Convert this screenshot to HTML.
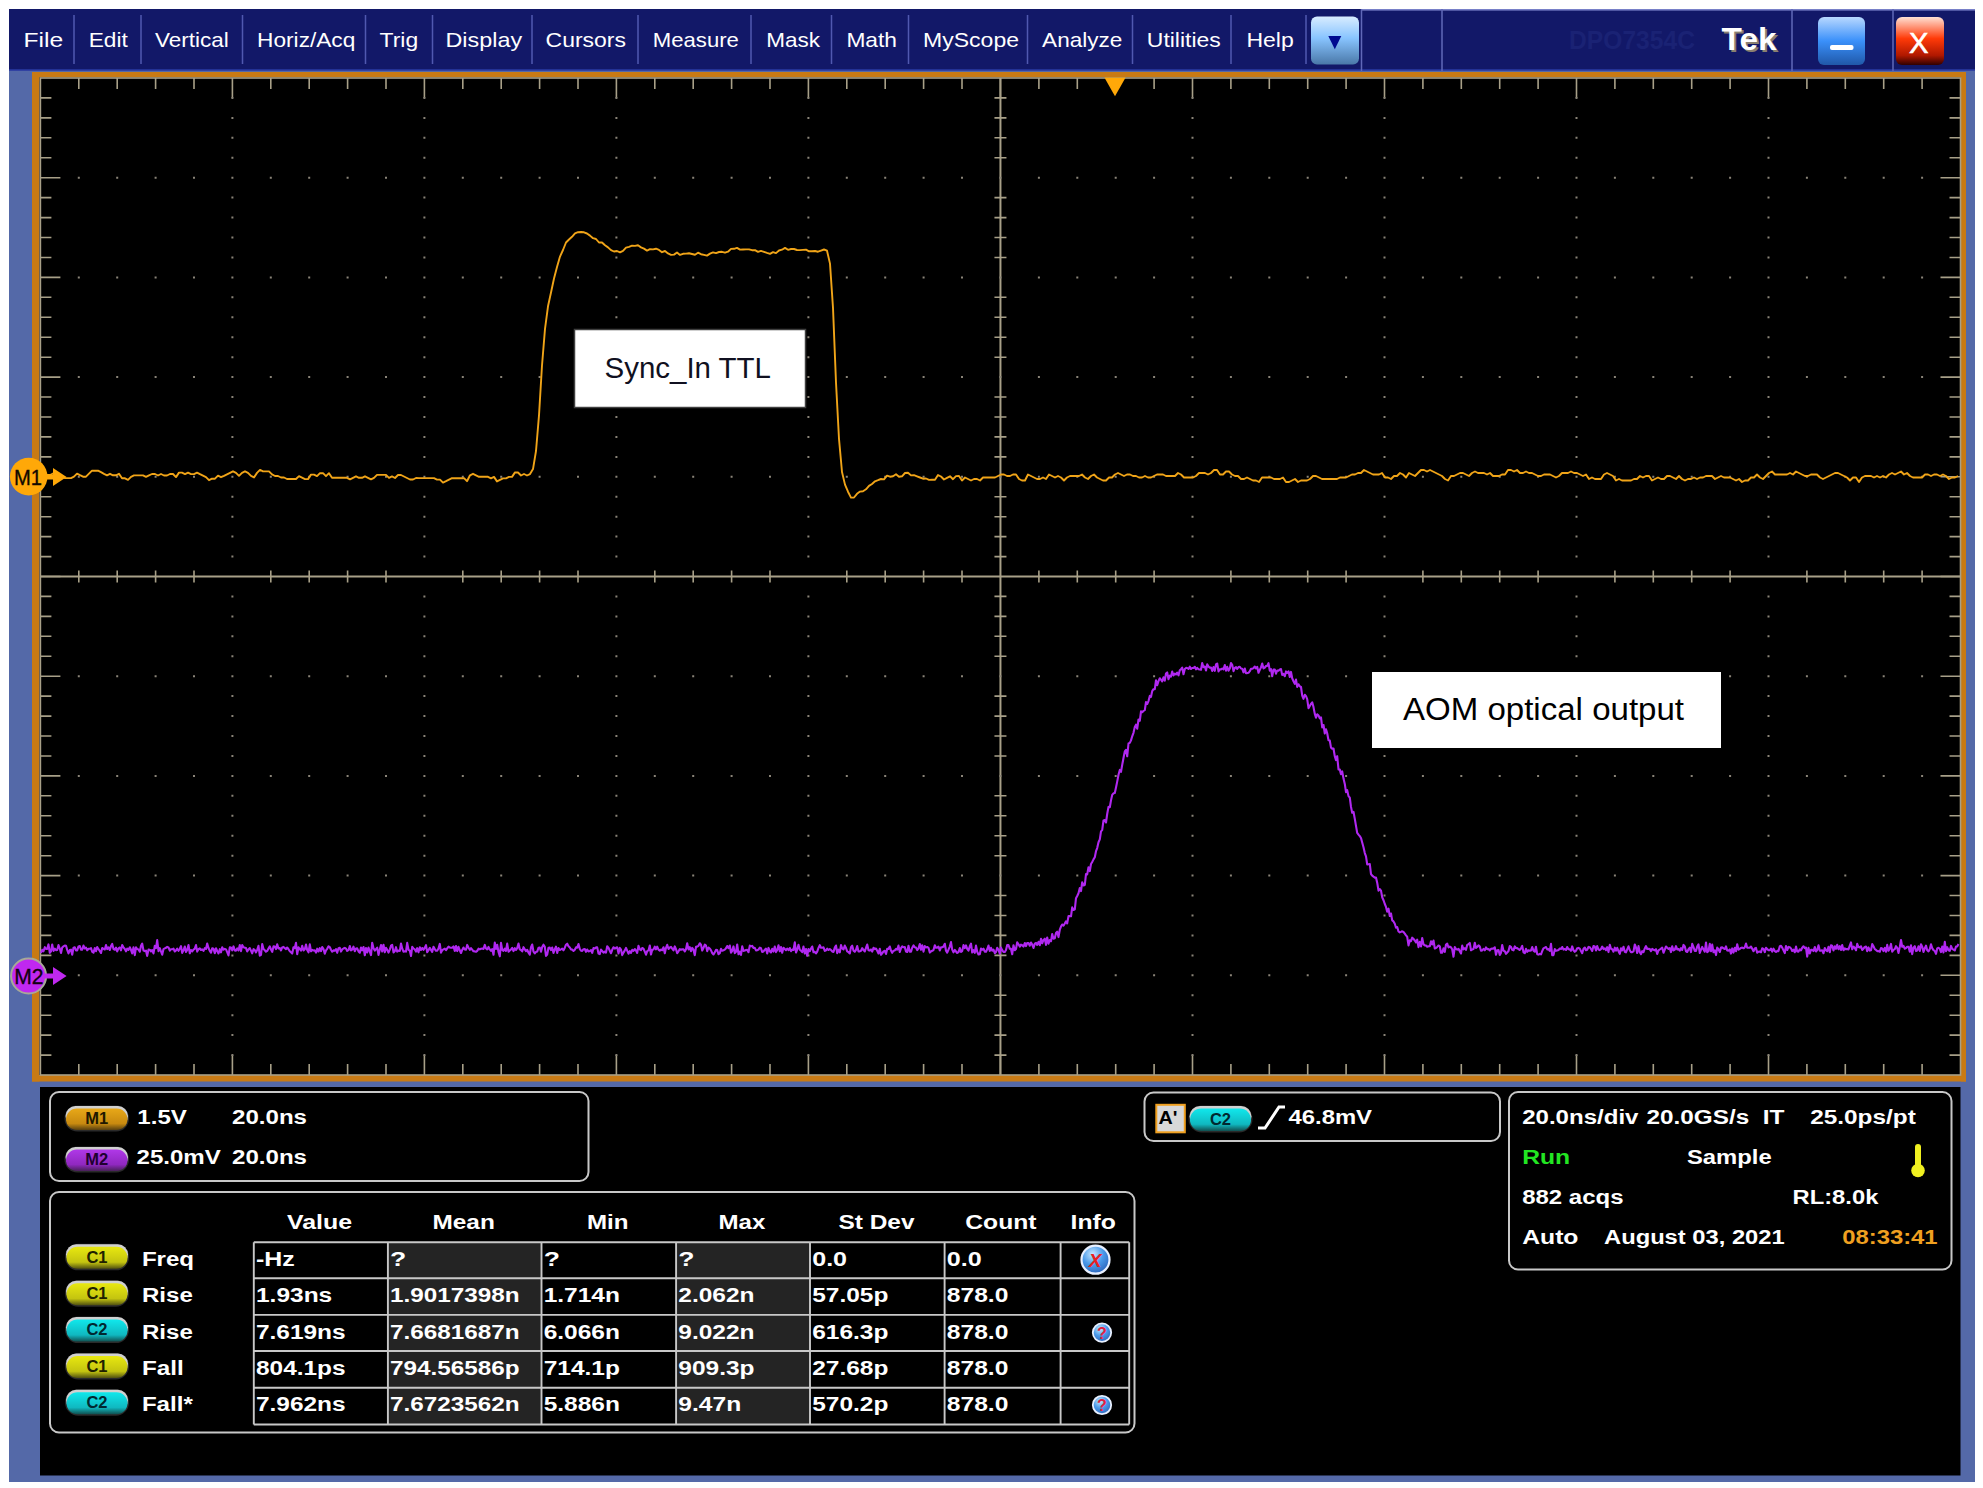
<!DOCTYPE html><html><head><meta charset="utf-8"><style>html,body{margin:0;padding:0;background:#fff;width:1983px;height:1488px;overflow:hidden}svg{display:block}text{font-family:"Liberation Sans",sans-serif}</style></head><body>
<svg width="1983" height="1488" viewBox="0 0 1983 1488">
<defs>
<linearGradient id="gBtn" x1="0" y1="0" x2="0" y2="1"><stop offset="0" stop-color="#d8ecff"/><stop offset="0.45" stop-color="#88c4ff"/><stop offset="1" stop-color="#4a78a8"/></linearGradient>
<linearGradient id="gMin" x1="0" y1="0" x2="0" y2="1"><stop offset="0" stop-color="#b8d8ff"/><stop offset="0.5" stop-color="#3a90fa"/><stop offset="1" stop-color="#2058a8"/></linearGradient>
<linearGradient id="gCls" x1="0" y1="0" x2="0" y2="1"><stop offset="0" stop-color="#ffe0d4"/><stop offset="0.45" stop-color="#ff3a08"/><stop offset="0.8" stop-color="#b01800"/><stop offset="1" stop-color="#300000"/></linearGradient>
<linearGradient id="gM1" x1="0" y1="0" x2="0" y2="1"><stop offset="0" stop-color="#e8a818"/><stop offset="0.7" stop-color="#c88a10"/><stop offset="1" stop-color="#584010"/></linearGradient>
<linearGradient id="gM2" x1="0" y1="0" x2="0" y2="1"><stop offset="0" stop-color="#b038e8"/><stop offset="0.7" stop-color="#9028c0"/><stop offset="1" stop-color="#482058"/></linearGradient>
<linearGradient id="gC1" x1="0" y1="0" x2="0" y2="1"><stop offset="0" stop-color="#e8e810"/><stop offset="0.7" stop-color="#c4c410"/><stop offset="1" stop-color="#505010"/></linearGradient>
<linearGradient id="gC2" x1="0" y1="0" x2="0" y2="1"><stop offset="0" stop-color="#10e8ec"/><stop offset="0.7" stop-color="#10b8c0"/><stop offset="1" stop-color="#105050"/></linearGradient>
<radialGradient id="gBall" cx="0.4" cy="0.3" r="0.75"><stop offset="0" stop-color="#c8e8ff"/><stop offset="0.5" stop-color="#4a9aea"/><stop offset="1" stop-color="#2a60b8"/></radialGradient>
</defs>
<rect x="9" y="9" width="1966" height="1473" fill="#5469a8"/>
<rect x="9" y="9" width="1966" height="61" fill="#121868"/>
<rect x="9" y="69" width="1966" height="2" fill="#2838a0" opacity="0.8"/>
<rect x="1362" y="9" width="613" height="1.6" fill="#7880c8"/>
<rect x="73.25" y="15" width="1.5" height="49" fill="#5058b0"/>
<rect x="140.25" y="15" width="1.5" height="49" fill="#5058b0"/>
<rect x="241.75" y="15" width="1.5" height="49" fill="#5058b0"/>
<rect x="364.75" y="15" width="1.5" height="49" fill="#5058b0"/>
<rect x="431.75" y="15" width="1.5" height="49" fill="#5058b0"/>
<rect x="531.25" y="15" width="1.5" height="49" fill="#5058b0"/>
<rect x="637.25" y="15" width="1.5" height="49" fill="#5058b0"/>
<rect x="750.25" y="15" width="1.5" height="49" fill="#5058b0"/>
<rect x="830.75" y="15" width="1.5" height="49" fill="#5058b0"/>
<rect x="907.75" y="15" width="1.5" height="49" fill="#5058b0"/>
<rect x="1026.75" y="15" width="1.5" height="49" fill="#5058b0"/>
<rect x="1131.75" y="15" width="1.5" height="49" fill="#5058b0"/>
<rect x="1230.25" y="15" width="1.5" height="49" fill="#5058b0"/>
<rect x="1305.25" y="15" width="1.5" height="49" fill="#5058b0"/>
<rect x="1360.75" y="9" width="1.5" height="62" fill="#6068b8"/>
<rect x="1441.25" y="9" width="1.5" height="62" fill="#6068b8"/>
<rect x="1791.25" y="9" width="1.5" height="62" fill="#6068b8"/>
<rect x="1892.25" y="9" width="1.5" height="62" fill="#6068b8"/>
<text x="23.4" y="47" font-size="21" fill="#ffffff" textLength="39.7" lengthAdjust="spacingAndGlyphs">File</text>
<text x="88.7" y="47" font-size="21" fill="#ffffff" textLength="39.1" lengthAdjust="spacingAndGlyphs">Edit</text>
<text x="155.0" y="47" font-size="21" fill="#ffffff" textLength="73.7" lengthAdjust="spacingAndGlyphs">Vertical</text>
<text x="257.09999999999997" y="47" font-size="21" fill="#ffffff" textLength="98.2" lengthAdjust="spacingAndGlyphs">Horiz/Acq</text>
<text x="379.59999999999997" y="47" font-size="21" fill="#ffffff" textLength="38.6" lengthAdjust="spacingAndGlyphs">Trig</text>
<text x="445.5" y="47" font-size="21" fill="#ffffff" textLength="76.6" lengthAdjust="spacingAndGlyphs">Display</text>
<text x="545.6" y="47" font-size="21" fill="#ffffff" textLength="80.4" lengthAdjust="spacingAndGlyphs">Cursors</text>
<text x="652.8" y="47" font-size="21" fill="#ffffff" textLength="86.1" lengthAdjust="spacingAndGlyphs">Measure</text>
<text x="766.3" y="47" font-size="21" fill="#ffffff" textLength="53.8" lengthAdjust="spacingAndGlyphs">Mask</text>
<text x="846.4" y="47" font-size="21" fill="#ffffff" textLength="50.6" lengthAdjust="spacingAndGlyphs">Math</text>
<text x="923.1" y="47" font-size="21" fill="#ffffff" textLength="95.9" lengthAdjust="spacingAndGlyphs">MyScope</text>
<text x="1042.1000000000001" y="47" font-size="21" fill="#ffffff" textLength="80.3" lengthAdjust="spacingAndGlyphs">Analyze</text>
<text x="1146.8000000000002" y="47" font-size="21" fill="#ffffff" textLength="74.0" lengthAdjust="spacingAndGlyphs">Utilities</text>
<text x="1246.4" y="47" font-size="21" fill="#ffffff" textLength="47.4" lengthAdjust="spacingAndGlyphs">Help</text>
<rect x="1311" y="16.5" width="48" height="48" rx="6" fill="url(#gBtn)"/>
<path d="M1328.3 36 L1341.3 36 L1334.8 49.3 Z" fill="#000a90"/>
<text x="1569" y="48.8" font-size="26" font-weight="bold" fill="#1a2274" textLength="126" lengthAdjust="spacingAndGlyphs">DPO7354C</text>
<text x="1723.5" y="51.5" font-size="32" font-weight="bold" fill="#8a8070" textLength="55" lengthAdjust="spacingAndGlyphs">Tek</text>
<text x="1721.5" y="49.5" font-size="32" font-weight="bold" fill="#ffffff" textLength="55" lengthAdjust="spacingAndGlyphs">Tek</text>
<rect x="1818" y="17" width="47" height="48" rx="6" fill="url(#gMin)"/>
<rect x="1830" y="45" width="23.5" height="5" rx="2" fill="#ffffff"/>
<rect x="1896" y="17" width="48" height="48" rx="6" fill="url(#gCls)"/>
<text x="1909" y="53.2" font-size="30" fill="#ffffff" stroke="#ffffff" stroke-width="0.6" textLength="19.5" lengthAdjust="spacingAndGlyphs">X</text>
<rect x="32" y="72" width="1934" height="9.5" fill="#c87a14"/>
<rect x="32" y="72" width="7.5" height="1009.5" fill="#c87a14"/>
<rect x="1960.8" y="72" width="5.2" height="1009.5" fill="#c87a14"/>
<rect x="32" y="1075" width="1934" height="6.5" fill="#c87a14"/>
<rect x="39.5" y="77.3" width="1921.3" height="997.7" fill="#000"/>
<rect x="40.4" y="78" width="1920.1" height="997" fill="none" stroke="#a8a088" stroke-width="1.6"/><line x1="1000.4499999999999" y1="78" x2="1000.4499999999999" y2="1075" stroke="#a8a088" stroke-width="2"/><line x1="40.4" y1="576.5" x2="1960.5" y2="576.5" stroke="#a8a088" stroke-width="2"/><path d="M78.8 78v11M78.8 1075v-11M78.8 570.5v12M117.2 78v11M117.2 1075v-11M117.2 570.5v12M155.6 78v11M155.6 1075v-11M155.6 570.5v12M194.0 78v11M194.0 1075v-11M194.0 570.5v12M232.4 78v20M232.4 1075v-20M270.8 78v11M270.8 1075v-11M270.8 570.5v12M309.2 78v11M309.2 1075v-11M309.2 570.5v12M347.6 78v11M347.6 1075v-11M347.6 570.5v12M386.0 78v11M386.0 1075v-11M386.0 570.5v12M424.4 78v20M424.4 1075v-20M462.8 78v11M462.8 1075v-11M462.8 570.5v12M501.2 78v11M501.2 1075v-11M501.2 570.5v12M539.6 78v11M539.6 1075v-11M539.6 570.5v12M578.0 78v11M578.0 1075v-11M578.0 570.5v12M616.4 78v20M616.4 1075v-20M654.8 78v11M654.8 1075v-11M654.8 570.5v12M693.2 78v11M693.2 1075v-11M693.2 570.5v12M731.6 78v11M731.6 1075v-11M731.6 570.5v12M770.0 78v11M770.0 1075v-11M770.0 570.5v12M808.4 78v20M808.4 1075v-20M846.8 78v11M846.8 1075v-11M846.8 570.5v12M885.2 78v11M885.2 1075v-11M885.2 570.5v12M923.6 78v11M923.6 1075v-11M923.6 570.5v12M962.0 78v11M962.0 1075v-11M962.0 570.5v12M1000.4 78v20M1000.4 1075v-20M1038.9 78v11M1038.9 1075v-11M1038.9 570.5v12M1077.3 78v11M1077.3 1075v-11M1077.3 570.5v12M1115.7 78v11M1115.7 1075v-11M1115.7 570.5v12M1154.1 78v11M1154.1 1075v-11M1154.1 570.5v12M1192.5 78v20M1192.5 1075v-20M1230.9 78v11M1230.9 1075v-11M1230.9 570.5v12M1269.3 78v11M1269.3 1075v-11M1269.3 570.5v12M1307.7 78v11M1307.7 1075v-11M1307.7 570.5v12M1346.1 78v11M1346.1 1075v-11M1346.1 570.5v12M1384.5 78v20M1384.5 1075v-20M1422.9 78v11M1422.9 1075v-11M1422.9 570.5v12M1461.3 78v11M1461.3 1075v-11M1461.3 570.5v12M1499.7 78v11M1499.7 1075v-11M1499.7 570.5v12M1538.1 78v11M1538.1 1075v-11M1538.1 570.5v12M1576.5 78v20M1576.5 1075v-20M1614.9 78v11M1614.9 1075v-11M1614.9 570.5v12M1653.3 78v11M1653.3 1075v-11M1653.3 570.5v12M1691.7 78v11M1691.7 1075v-11M1691.7 570.5v12M1730.1 78v11M1730.1 1075v-11M1730.1 570.5v12M1768.5 78v20M1768.5 1075v-20M1806.9 78v11M1806.9 1075v-11M1806.9 570.5v12M1845.3 78v11M1845.3 1075v-11M1845.3 570.5v12M1883.7 78v11M1883.7 1075v-11M1883.7 570.5v12M1922.1 78v11M1922.1 1075v-11M1922.1 570.5v12M40.4 97.9h11M1960.5 97.9h-11M994.4499999999999 97.9h12M40.4 117.9h11M1960.5 117.9h-11M994.4499999999999 117.9h12M40.4 137.8h11M1960.5 137.8h-11M994.4499999999999 137.8h12M40.4 157.8h11M1960.5 157.8h-11M994.4499999999999 157.8h12M40.4 177.7h20M1960.5 177.7h-20M40.4 197.6h11M1960.5 197.6h-11M994.4499999999999 197.6h12M40.4 217.6h11M1960.5 217.6h-11M994.4499999999999 217.6h12M40.4 237.5h11M1960.5 237.5h-11M994.4499999999999 237.5h12M40.4 257.5h11M1960.5 257.5h-11M994.4499999999999 257.5h12M40.4 277.4h20M1960.5 277.4h-20M40.4 297.3h11M1960.5 297.3h-11M994.4499999999999 297.3h12M40.4 317.3h11M1960.5 317.3h-11M994.4499999999999 317.3h12M40.4 337.2h11M1960.5 337.2h-11M994.4499999999999 337.2h12M40.4 357.2h11M1960.5 357.2h-11M994.4499999999999 357.2h12M40.4 377.1h20M1960.5 377.1h-20M40.4 397.0h11M1960.5 397.0h-11M994.4499999999999 397.0h12M40.4 417.0h11M1960.5 417.0h-11M994.4499999999999 417.0h12M40.4 436.9h11M1960.5 436.9h-11M994.4499999999999 436.9h12M40.4 456.9h11M1960.5 456.9h-11M994.4499999999999 456.9h12M40.4 476.8h20M1960.5 476.8h-20M40.4 496.7h11M1960.5 496.7h-11M994.4499999999999 496.7h12M40.4 516.7h11M1960.5 516.7h-11M994.4499999999999 516.7h12M40.4 536.6h11M1960.5 536.6h-11M994.4499999999999 536.6h12M40.4 556.6h11M1960.5 556.6h-11M994.4499999999999 556.6h12M40.4 576.5h20M1960.5 576.5h-20M40.4 596.4h11M1960.5 596.4h-11M994.4499999999999 596.4h12M40.4 616.4h11M1960.5 616.4h-11M994.4499999999999 616.4h12M40.4 636.3h11M1960.5 636.3h-11M994.4499999999999 636.3h12M40.4 656.3h11M1960.5 656.3h-11M994.4499999999999 656.3h12M40.4 676.2h20M1960.5 676.2h-20M40.4 696.1h11M1960.5 696.1h-11M994.4499999999999 696.1h12M40.4 716.1h11M1960.5 716.1h-11M994.4499999999999 716.1h12M40.4 736.0h11M1960.5 736.0h-11M994.4499999999999 736.0h12M40.4 756.0h11M1960.5 756.0h-11M994.4499999999999 756.0h12M40.4 775.9h20M1960.5 775.9h-20M40.4 795.8h11M1960.5 795.8h-11M994.4499999999999 795.8h12M40.4 815.8h11M1960.5 815.8h-11M994.4499999999999 815.8h12M40.4 835.7h11M1960.5 835.7h-11M994.4499999999999 835.7h12M40.4 855.7h11M1960.5 855.7h-11M994.4499999999999 855.7h12M40.4 875.6h20M1960.5 875.6h-20M40.4 895.5h11M1960.5 895.5h-11M994.4499999999999 895.5h12M40.4 915.5h11M1960.5 915.5h-11M994.4499999999999 915.5h12M40.4 935.4h11M1960.5 935.4h-11M994.4499999999999 935.4h12M40.4 955.4h11M1960.5 955.4h-11M994.4499999999999 955.4h12M40.4 975.3h20M1960.5 975.3h-20M40.4 995.2h11M1960.5 995.2h-11M994.4499999999999 995.2h12M40.4 1015.2h11M1960.5 1015.2h-11M994.4499999999999 1015.2h12M40.4 1035.1h11M1960.5 1035.1h-11M994.4499999999999 1035.1h12M40.4 1055.1h11M1960.5 1055.1h-11M994.4499999999999 1055.1h12" stroke="#a8a088" stroke-width="1.6" fill="none"/><path d="M231.4 96.9h2v2h-2zM231.4 116.9h2v2h-2zM231.4 136.8h2v2h-2zM231.4 156.8h2v2h-2zM231.4 196.6h2v2h-2zM231.4 216.6h2v2h-2zM231.4 236.5h2v2h-2zM231.4 256.5h2v2h-2zM231.4 296.3h2v2h-2zM231.4 316.3h2v2h-2zM231.4 336.2h2v2h-2zM231.4 356.2h2v2h-2zM231.4 396.0h2v2h-2zM231.4 416.0h2v2h-2zM231.4 435.9h2v2h-2zM231.4 455.9h2v2h-2zM231.4 495.7h2v2h-2zM231.4 515.7h2v2h-2zM231.4 535.6h2v2h-2zM231.4 555.6h2v2h-2zM231.4 595.4h2v2h-2zM231.4 615.4h2v2h-2zM231.4 635.3h2v2h-2zM231.4 655.3h2v2h-2zM231.4 695.1h2v2h-2zM231.4 715.1h2v2h-2zM231.4 735.0h2v2h-2zM231.4 755.0h2v2h-2zM231.4 794.8h2v2h-2zM231.4 814.8h2v2h-2zM231.4 834.7h2v2h-2zM231.4 854.7h2v2h-2zM231.4 894.5h2v2h-2zM231.4 914.5h2v2h-2zM231.4 934.4h2v2h-2zM231.4 954.4h2v2h-2zM231.4 994.2h2v2h-2zM231.4 1014.2h2v2h-2zM231.4 1034.1h2v2h-2zM231.4 1054.1h2v2h-2zM77.8 176.7h2v2h-2zM116.2 176.7h2v2h-2zM154.6 176.7h2v2h-2zM193.0 176.7h2v2h-2zM231.4 176.7h2v2h-2zM269.8 176.7h2v2h-2zM308.2 176.7h2v2h-2zM346.6 176.7h2v2h-2zM385.0 176.7h2v2h-2zM423.4 176.7h2v2h-2zM461.8 176.7h2v2h-2zM500.2 176.7h2v2h-2zM538.6 176.7h2v2h-2zM577.0 176.7h2v2h-2zM615.4 176.7h2v2h-2zM653.8 176.7h2v2h-2zM692.2 176.7h2v2h-2zM730.6 176.7h2v2h-2zM769.0 176.7h2v2h-2zM807.4 176.7h2v2h-2zM845.8 176.7h2v2h-2zM884.2 176.7h2v2h-2zM922.6 176.7h2v2h-2zM961.0 176.7h2v2h-2zM999.4 176.7h2v2h-2zM1037.9 176.7h2v2h-2zM1076.3 176.7h2v2h-2zM1114.7 176.7h2v2h-2zM1153.1 176.7h2v2h-2zM1191.5 176.7h2v2h-2zM1229.9 176.7h2v2h-2zM1268.3 176.7h2v2h-2zM1306.7 176.7h2v2h-2zM1345.1 176.7h2v2h-2zM1383.5 176.7h2v2h-2zM1421.9 176.7h2v2h-2zM1460.3 176.7h2v2h-2zM1498.7 176.7h2v2h-2zM1537.1 176.7h2v2h-2zM1575.5 176.7h2v2h-2zM1613.9 176.7h2v2h-2zM1652.3 176.7h2v2h-2zM1690.7 176.7h2v2h-2zM1729.1 176.7h2v2h-2zM1767.5 176.7h2v2h-2zM1805.9 176.7h2v2h-2zM1844.3 176.7h2v2h-2zM1882.7 176.7h2v2h-2zM1921.1 176.7h2v2h-2zM423.4 96.9h2v2h-2zM423.4 116.9h2v2h-2zM423.4 136.8h2v2h-2zM423.4 156.8h2v2h-2zM423.4 196.6h2v2h-2zM423.4 216.6h2v2h-2zM423.4 236.5h2v2h-2zM423.4 256.5h2v2h-2zM423.4 296.3h2v2h-2zM423.4 316.3h2v2h-2zM423.4 336.2h2v2h-2zM423.4 356.2h2v2h-2zM423.4 396.0h2v2h-2zM423.4 416.0h2v2h-2zM423.4 435.9h2v2h-2zM423.4 455.9h2v2h-2zM423.4 495.7h2v2h-2zM423.4 515.7h2v2h-2zM423.4 535.6h2v2h-2zM423.4 555.6h2v2h-2zM423.4 595.4h2v2h-2zM423.4 615.4h2v2h-2zM423.4 635.3h2v2h-2zM423.4 655.3h2v2h-2zM423.4 695.1h2v2h-2zM423.4 715.1h2v2h-2zM423.4 735.0h2v2h-2zM423.4 755.0h2v2h-2zM423.4 794.8h2v2h-2zM423.4 814.8h2v2h-2zM423.4 834.7h2v2h-2zM423.4 854.7h2v2h-2zM423.4 894.5h2v2h-2zM423.4 914.5h2v2h-2zM423.4 934.4h2v2h-2zM423.4 954.4h2v2h-2zM423.4 994.2h2v2h-2zM423.4 1014.2h2v2h-2zM423.4 1034.1h2v2h-2zM423.4 1054.1h2v2h-2zM77.8 276.4h2v2h-2zM116.2 276.4h2v2h-2zM154.6 276.4h2v2h-2zM193.0 276.4h2v2h-2zM231.4 276.4h2v2h-2zM269.8 276.4h2v2h-2zM308.2 276.4h2v2h-2zM346.6 276.4h2v2h-2zM385.0 276.4h2v2h-2zM423.4 276.4h2v2h-2zM461.8 276.4h2v2h-2zM500.2 276.4h2v2h-2zM538.6 276.4h2v2h-2zM577.0 276.4h2v2h-2zM615.4 276.4h2v2h-2zM653.8 276.4h2v2h-2zM692.2 276.4h2v2h-2zM730.6 276.4h2v2h-2zM769.0 276.4h2v2h-2zM807.4 276.4h2v2h-2zM845.8 276.4h2v2h-2zM884.2 276.4h2v2h-2zM922.6 276.4h2v2h-2zM961.0 276.4h2v2h-2zM999.4 276.4h2v2h-2zM1037.9 276.4h2v2h-2zM1076.3 276.4h2v2h-2zM1114.7 276.4h2v2h-2zM1153.1 276.4h2v2h-2zM1191.5 276.4h2v2h-2zM1229.9 276.4h2v2h-2zM1268.3 276.4h2v2h-2zM1306.7 276.4h2v2h-2zM1345.1 276.4h2v2h-2zM1383.5 276.4h2v2h-2zM1421.9 276.4h2v2h-2zM1460.3 276.4h2v2h-2zM1498.7 276.4h2v2h-2zM1537.1 276.4h2v2h-2zM1575.5 276.4h2v2h-2zM1613.9 276.4h2v2h-2zM1652.3 276.4h2v2h-2zM1690.7 276.4h2v2h-2zM1729.1 276.4h2v2h-2zM1767.5 276.4h2v2h-2zM1805.9 276.4h2v2h-2zM1844.3 276.4h2v2h-2zM1882.7 276.4h2v2h-2zM1921.1 276.4h2v2h-2zM615.4 96.9h2v2h-2zM615.4 116.9h2v2h-2zM615.4 136.8h2v2h-2zM615.4 156.8h2v2h-2zM615.4 196.6h2v2h-2zM615.4 216.6h2v2h-2zM615.4 236.5h2v2h-2zM615.4 256.5h2v2h-2zM615.4 296.3h2v2h-2zM615.4 316.3h2v2h-2zM615.4 336.2h2v2h-2zM615.4 356.2h2v2h-2zM615.4 396.0h2v2h-2zM615.4 416.0h2v2h-2zM615.4 435.9h2v2h-2zM615.4 455.9h2v2h-2zM615.4 495.7h2v2h-2zM615.4 515.7h2v2h-2zM615.4 535.6h2v2h-2zM615.4 555.6h2v2h-2zM615.4 595.4h2v2h-2zM615.4 615.4h2v2h-2zM615.4 635.3h2v2h-2zM615.4 655.3h2v2h-2zM615.4 695.1h2v2h-2zM615.4 715.1h2v2h-2zM615.4 735.0h2v2h-2zM615.4 755.0h2v2h-2zM615.4 794.8h2v2h-2zM615.4 814.8h2v2h-2zM615.4 834.7h2v2h-2zM615.4 854.7h2v2h-2zM615.4 894.5h2v2h-2zM615.4 914.5h2v2h-2zM615.4 934.4h2v2h-2zM615.4 954.4h2v2h-2zM615.4 994.2h2v2h-2zM615.4 1014.2h2v2h-2zM615.4 1034.1h2v2h-2zM615.4 1054.1h2v2h-2zM77.8 376.1h2v2h-2zM116.2 376.1h2v2h-2zM154.6 376.1h2v2h-2zM193.0 376.1h2v2h-2zM231.4 376.1h2v2h-2zM269.8 376.1h2v2h-2zM308.2 376.1h2v2h-2zM346.6 376.1h2v2h-2zM385.0 376.1h2v2h-2zM423.4 376.1h2v2h-2zM461.8 376.1h2v2h-2zM500.2 376.1h2v2h-2zM538.6 376.1h2v2h-2zM577.0 376.1h2v2h-2zM615.4 376.1h2v2h-2zM653.8 376.1h2v2h-2zM692.2 376.1h2v2h-2zM730.6 376.1h2v2h-2zM769.0 376.1h2v2h-2zM807.4 376.1h2v2h-2zM845.8 376.1h2v2h-2zM884.2 376.1h2v2h-2zM922.6 376.1h2v2h-2zM961.0 376.1h2v2h-2zM999.4 376.1h2v2h-2zM1037.9 376.1h2v2h-2zM1076.3 376.1h2v2h-2zM1114.7 376.1h2v2h-2zM1153.1 376.1h2v2h-2zM1191.5 376.1h2v2h-2zM1229.9 376.1h2v2h-2zM1268.3 376.1h2v2h-2zM1306.7 376.1h2v2h-2zM1345.1 376.1h2v2h-2zM1383.5 376.1h2v2h-2zM1421.9 376.1h2v2h-2zM1460.3 376.1h2v2h-2zM1498.7 376.1h2v2h-2zM1537.1 376.1h2v2h-2zM1575.5 376.1h2v2h-2zM1613.9 376.1h2v2h-2zM1652.3 376.1h2v2h-2zM1690.7 376.1h2v2h-2zM1729.1 376.1h2v2h-2zM1767.5 376.1h2v2h-2zM1805.9 376.1h2v2h-2zM1844.3 376.1h2v2h-2zM1882.7 376.1h2v2h-2zM1921.1 376.1h2v2h-2zM807.4 96.9h2v2h-2zM807.4 116.9h2v2h-2zM807.4 136.8h2v2h-2zM807.4 156.8h2v2h-2zM807.4 196.6h2v2h-2zM807.4 216.6h2v2h-2zM807.4 236.5h2v2h-2zM807.4 256.5h2v2h-2zM807.4 296.3h2v2h-2zM807.4 316.3h2v2h-2zM807.4 336.2h2v2h-2zM807.4 356.2h2v2h-2zM807.4 396.0h2v2h-2zM807.4 416.0h2v2h-2zM807.4 435.9h2v2h-2zM807.4 455.9h2v2h-2zM807.4 495.7h2v2h-2zM807.4 515.7h2v2h-2zM807.4 535.6h2v2h-2zM807.4 555.6h2v2h-2zM807.4 595.4h2v2h-2zM807.4 615.4h2v2h-2zM807.4 635.3h2v2h-2zM807.4 655.3h2v2h-2zM807.4 695.1h2v2h-2zM807.4 715.1h2v2h-2zM807.4 735.0h2v2h-2zM807.4 755.0h2v2h-2zM807.4 794.8h2v2h-2zM807.4 814.8h2v2h-2zM807.4 834.7h2v2h-2zM807.4 854.7h2v2h-2zM807.4 894.5h2v2h-2zM807.4 914.5h2v2h-2zM807.4 934.4h2v2h-2zM807.4 954.4h2v2h-2zM807.4 994.2h2v2h-2zM807.4 1014.2h2v2h-2zM807.4 1034.1h2v2h-2zM807.4 1054.1h2v2h-2zM77.8 475.8h2v2h-2zM116.2 475.8h2v2h-2zM154.6 475.8h2v2h-2zM193.0 475.8h2v2h-2zM231.4 475.8h2v2h-2zM269.8 475.8h2v2h-2zM308.2 475.8h2v2h-2zM346.6 475.8h2v2h-2zM385.0 475.8h2v2h-2zM423.4 475.8h2v2h-2zM461.8 475.8h2v2h-2zM500.2 475.8h2v2h-2zM538.6 475.8h2v2h-2zM577.0 475.8h2v2h-2zM615.4 475.8h2v2h-2zM653.8 475.8h2v2h-2zM692.2 475.8h2v2h-2zM730.6 475.8h2v2h-2zM769.0 475.8h2v2h-2zM807.4 475.8h2v2h-2zM845.8 475.8h2v2h-2zM884.2 475.8h2v2h-2zM922.6 475.8h2v2h-2zM961.0 475.8h2v2h-2zM999.4 475.8h2v2h-2zM1037.9 475.8h2v2h-2zM1076.3 475.8h2v2h-2zM1114.7 475.8h2v2h-2zM1153.1 475.8h2v2h-2zM1191.5 475.8h2v2h-2zM1229.9 475.8h2v2h-2zM1268.3 475.8h2v2h-2zM1306.7 475.8h2v2h-2zM1345.1 475.8h2v2h-2zM1383.5 475.8h2v2h-2zM1421.9 475.8h2v2h-2zM1460.3 475.8h2v2h-2zM1498.7 475.8h2v2h-2zM1537.1 475.8h2v2h-2zM1575.5 475.8h2v2h-2zM1613.9 475.8h2v2h-2zM1652.3 475.8h2v2h-2zM1690.7 475.8h2v2h-2zM1729.1 475.8h2v2h-2zM1767.5 475.8h2v2h-2zM1805.9 475.8h2v2h-2zM1844.3 475.8h2v2h-2zM1882.7 475.8h2v2h-2zM1921.1 475.8h2v2h-2zM1191.5 96.9h2v2h-2zM1191.5 116.9h2v2h-2zM1191.5 136.8h2v2h-2zM1191.5 156.8h2v2h-2zM1191.5 196.6h2v2h-2zM1191.5 216.6h2v2h-2zM1191.5 236.5h2v2h-2zM1191.5 256.5h2v2h-2zM1191.5 296.3h2v2h-2zM1191.5 316.3h2v2h-2zM1191.5 336.2h2v2h-2zM1191.5 356.2h2v2h-2zM1191.5 396.0h2v2h-2zM1191.5 416.0h2v2h-2zM1191.5 435.9h2v2h-2zM1191.5 455.9h2v2h-2zM1191.5 495.7h2v2h-2zM1191.5 515.7h2v2h-2zM1191.5 535.6h2v2h-2zM1191.5 555.6h2v2h-2zM1191.5 595.4h2v2h-2zM1191.5 615.4h2v2h-2zM1191.5 635.3h2v2h-2zM1191.5 655.3h2v2h-2zM1191.5 695.1h2v2h-2zM1191.5 715.1h2v2h-2zM1191.5 735.0h2v2h-2zM1191.5 755.0h2v2h-2zM1191.5 794.8h2v2h-2zM1191.5 814.8h2v2h-2zM1191.5 834.7h2v2h-2zM1191.5 854.7h2v2h-2zM1191.5 894.5h2v2h-2zM1191.5 914.5h2v2h-2zM1191.5 934.4h2v2h-2zM1191.5 954.4h2v2h-2zM1191.5 994.2h2v2h-2zM1191.5 1014.2h2v2h-2zM1191.5 1034.1h2v2h-2zM1191.5 1054.1h2v2h-2zM77.8 675.2h2v2h-2zM116.2 675.2h2v2h-2zM154.6 675.2h2v2h-2zM193.0 675.2h2v2h-2zM231.4 675.2h2v2h-2zM269.8 675.2h2v2h-2zM308.2 675.2h2v2h-2zM346.6 675.2h2v2h-2zM385.0 675.2h2v2h-2zM423.4 675.2h2v2h-2zM461.8 675.2h2v2h-2zM500.2 675.2h2v2h-2zM538.6 675.2h2v2h-2zM577.0 675.2h2v2h-2zM615.4 675.2h2v2h-2zM653.8 675.2h2v2h-2zM692.2 675.2h2v2h-2zM730.6 675.2h2v2h-2zM769.0 675.2h2v2h-2zM807.4 675.2h2v2h-2zM845.8 675.2h2v2h-2zM884.2 675.2h2v2h-2zM922.6 675.2h2v2h-2zM961.0 675.2h2v2h-2zM999.4 675.2h2v2h-2zM1037.9 675.2h2v2h-2zM1076.3 675.2h2v2h-2zM1114.7 675.2h2v2h-2zM1153.1 675.2h2v2h-2zM1191.5 675.2h2v2h-2zM1229.9 675.2h2v2h-2zM1268.3 675.2h2v2h-2zM1306.7 675.2h2v2h-2zM1345.1 675.2h2v2h-2zM1383.5 675.2h2v2h-2zM1421.9 675.2h2v2h-2zM1460.3 675.2h2v2h-2zM1498.7 675.2h2v2h-2zM1537.1 675.2h2v2h-2zM1575.5 675.2h2v2h-2zM1613.9 675.2h2v2h-2zM1652.3 675.2h2v2h-2zM1690.7 675.2h2v2h-2zM1729.1 675.2h2v2h-2zM1767.5 675.2h2v2h-2zM1805.9 675.2h2v2h-2zM1844.3 675.2h2v2h-2zM1882.7 675.2h2v2h-2zM1921.1 675.2h2v2h-2zM1383.5 96.9h2v2h-2zM1383.5 116.9h2v2h-2zM1383.5 136.8h2v2h-2zM1383.5 156.8h2v2h-2zM1383.5 196.6h2v2h-2zM1383.5 216.6h2v2h-2zM1383.5 236.5h2v2h-2zM1383.5 256.5h2v2h-2zM1383.5 296.3h2v2h-2zM1383.5 316.3h2v2h-2zM1383.5 336.2h2v2h-2zM1383.5 356.2h2v2h-2zM1383.5 396.0h2v2h-2zM1383.5 416.0h2v2h-2zM1383.5 435.9h2v2h-2zM1383.5 455.9h2v2h-2zM1383.5 495.7h2v2h-2zM1383.5 515.7h2v2h-2zM1383.5 535.6h2v2h-2zM1383.5 555.6h2v2h-2zM1383.5 595.4h2v2h-2zM1383.5 615.4h2v2h-2zM1383.5 635.3h2v2h-2zM1383.5 655.3h2v2h-2zM1383.5 695.1h2v2h-2zM1383.5 715.1h2v2h-2zM1383.5 735.0h2v2h-2zM1383.5 755.0h2v2h-2zM1383.5 794.8h2v2h-2zM1383.5 814.8h2v2h-2zM1383.5 834.7h2v2h-2zM1383.5 854.7h2v2h-2zM1383.5 894.5h2v2h-2zM1383.5 914.5h2v2h-2zM1383.5 934.4h2v2h-2zM1383.5 954.4h2v2h-2zM1383.5 994.2h2v2h-2zM1383.5 1014.2h2v2h-2zM1383.5 1034.1h2v2h-2zM1383.5 1054.1h2v2h-2zM77.8 774.9h2v2h-2zM116.2 774.9h2v2h-2zM154.6 774.9h2v2h-2zM193.0 774.9h2v2h-2zM231.4 774.9h2v2h-2zM269.8 774.9h2v2h-2zM308.2 774.9h2v2h-2zM346.6 774.9h2v2h-2zM385.0 774.9h2v2h-2zM423.4 774.9h2v2h-2zM461.8 774.9h2v2h-2zM500.2 774.9h2v2h-2zM538.6 774.9h2v2h-2zM577.0 774.9h2v2h-2zM615.4 774.9h2v2h-2zM653.8 774.9h2v2h-2zM692.2 774.9h2v2h-2zM730.6 774.9h2v2h-2zM769.0 774.9h2v2h-2zM807.4 774.9h2v2h-2zM845.8 774.9h2v2h-2zM884.2 774.9h2v2h-2zM922.6 774.9h2v2h-2zM961.0 774.9h2v2h-2zM999.4 774.9h2v2h-2zM1037.9 774.9h2v2h-2zM1076.3 774.9h2v2h-2zM1114.7 774.9h2v2h-2zM1153.1 774.9h2v2h-2zM1191.5 774.9h2v2h-2zM1229.9 774.9h2v2h-2zM1268.3 774.9h2v2h-2zM1306.7 774.9h2v2h-2zM1345.1 774.9h2v2h-2zM1383.5 774.9h2v2h-2zM1421.9 774.9h2v2h-2zM1460.3 774.9h2v2h-2zM1498.7 774.9h2v2h-2zM1537.1 774.9h2v2h-2zM1575.5 774.9h2v2h-2zM1613.9 774.9h2v2h-2zM1652.3 774.9h2v2h-2zM1690.7 774.9h2v2h-2zM1729.1 774.9h2v2h-2zM1767.5 774.9h2v2h-2zM1805.9 774.9h2v2h-2zM1844.3 774.9h2v2h-2zM1882.7 774.9h2v2h-2zM1921.1 774.9h2v2h-2zM1575.5 96.9h2v2h-2zM1575.5 116.9h2v2h-2zM1575.5 136.8h2v2h-2zM1575.5 156.8h2v2h-2zM1575.5 196.6h2v2h-2zM1575.5 216.6h2v2h-2zM1575.5 236.5h2v2h-2zM1575.5 256.5h2v2h-2zM1575.5 296.3h2v2h-2zM1575.5 316.3h2v2h-2zM1575.5 336.2h2v2h-2zM1575.5 356.2h2v2h-2zM1575.5 396.0h2v2h-2zM1575.5 416.0h2v2h-2zM1575.5 435.9h2v2h-2zM1575.5 455.9h2v2h-2zM1575.5 495.7h2v2h-2zM1575.5 515.7h2v2h-2zM1575.5 535.6h2v2h-2zM1575.5 555.6h2v2h-2zM1575.5 595.4h2v2h-2zM1575.5 615.4h2v2h-2zM1575.5 635.3h2v2h-2zM1575.5 655.3h2v2h-2zM1575.5 695.1h2v2h-2zM1575.5 715.1h2v2h-2zM1575.5 735.0h2v2h-2zM1575.5 755.0h2v2h-2zM1575.5 794.8h2v2h-2zM1575.5 814.8h2v2h-2zM1575.5 834.7h2v2h-2zM1575.5 854.7h2v2h-2zM1575.5 894.5h2v2h-2zM1575.5 914.5h2v2h-2zM1575.5 934.4h2v2h-2zM1575.5 954.4h2v2h-2zM1575.5 994.2h2v2h-2zM1575.5 1014.2h2v2h-2zM1575.5 1034.1h2v2h-2zM1575.5 1054.1h2v2h-2zM77.8 874.6h2v2h-2zM116.2 874.6h2v2h-2zM154.6 874.6h2v2h-2zM193.0 874.6h2v2h-2zM231.4 874.6h2v2h-2zM269.8 874.6h2v2h-2zM308.2 874.6h2v2h-2zM346.6 874.6h2v2h-2zM385.0 874.6h2v2h-2zM423.4 874.6h2v2h-2zM461.8 874.6h2v2h-2zM500.2 874.6h2v2h-2zM538.6 874.6h2v2h-2zM577.0 874.6h2v2h-2zM615.4 874.6h2v2h-2zM653.8 874.6h2v2h-2zM692.2 874.6h2v2h-2zM730.6 874.6h2v2h-2zM769.0 874.6h2v2h-2zM807.4 874.6h2v2h-2zM845.8 874.6h2v2h-2zM884.2 874.6h2v2h-2zM922.6 874.6h2v2h-2zM961.0 874.6h2v2h-2zM999.4 874.6h2v2h-2zM1037.9 874.6h2v2h-2zM1076.3 874.6h2v2h-2zM1114.7 874.6h2v2h-2zM1153.1 874.6h2v2h-2zM1191.5 874.6h2v2h-2zM1229.9 874.6h2v2h-2zM1268.3 874.6h2v2h-2zM1306.7 874.6h2v2h-2zM1345.1 874.6h2v2h-2zM1383.5 874.6h2v2h-2zM1421.9 874.6h2v2h-2zM1460.3 874.6h2v2h-2zM1498.7 874.6h2v2h-2zM1537.1 874.6h2v2h-2zM1575.5 874.6h2v2h-2zM1613.9 874.6h2v2h-2zM1652.3 874.6h2v2h-2zM1690.7 874.6h2v2h-2zM1729.1 874.6h2v2h-2zM1767.5 874.6h2v2h-2zM1805.9 874.6h2v2h-2zM1844.3 874.6h2v2h-2zM1882.7 874.6h2v2h-2zM1921.1 874.6h2v2h-2zM1767.5 96.9h2v2h-2zM1767.5 116.9h2v2h-2zM1767.5 136.8h2v2h-2zM1767.5 156.8h2v2h-2zM1767.5 196.6h2v2h-2zM1767.5 216.6h2v2h-2zM1767.5 236.5h2v2h-2zM1767.5 256.5h2v2h-2zM1767.5 296.3h2v2h-2zM1767.5 316.3h2v2h-2zM1767.5 336.2h2v2h-2zM1767.5 356.2h2v2h-2zM1767.5 396.0h2v2h-2zM1767.5 416.0h2v2h-2zM1767.5 435.9h2v2h-2zM1767.5 455.9h2v2h-2zM1767.5 495.7h2v2h-2zM1767.5 515.7h2v2h-2zM1767.5 535.6h2v2h-2zM1767.5 555.6h2v2h-2zM1767.5 595.4h2v2h-2zM1767.5 615.4h2v2h-2zM1767.5 635.3h2v2h-2zM1767.5 655.3h2v2h-2zM1767.5 695.1h2v2h-2zM1767.5 715.1h2v2h-2zM1767.5 735.0h2v2h-2zM1767.5 755.0h2v2h-2zM1767.5 794.8h2v2h-2zM1767.5 814.8h2v2h-2zM1767.5 834.7h2v2h-2zM1767.5 854.7h2v2h-2zM1767.5 894.5h2v2h-2zM1767.5 914.5h2v2h-2zM1767.5 934.4h2v2h-2zM1767.5 954.4h2v2h-2zM1767.5 994.2h2v2h-2zM1767.5 1014.2h2v2h-2zM1767.5 1034.1h2v2h-2zM1767.5 1054.1h2v2h-2zM77.8 974.3h2v2h-2zM116.2 974.3h2v2h-2zM154.6 974.3h2v2h-2zM193.0 974.3h2v2h-2zM231.4 974.3h2v2h-2zM269.8 974.3h2v2h-2zM308.2 974.3h2v2h-2zM346.6 974.3h2v2h-2zM385.0 974.3h2v2h-2zM423.4 974.3h2v2h-2zM461.8 974.3h2v2h-2zM500.2 974.3h2v2h-2zM538.6 974.3h2v2h-2zM577.0 974.3h2v2h-2zM615.4 974.3h2v2h-2zM653.8 974.3h2v2h-2zM692.2 974.3h2v2h-2zM730.6 974.3h2v2h-2zM769.0 974.3h2v2h-2zM807.4 974.3h2v2h-2zM845.8 974.3h2v2h-2zM884.2 974.3h2v2h-2zM922.6 974.3h2v2h-2zM961.0 974.3h2v2h-2zM999.4 974.3h2v2h-2zM1037.9 974.3h2v2h-2zM1076.3 974.3h2v2h-2zM1114.7 974.3h2v2h-2zM1153.1 974.3h2v2h-2zM1191.5 974.3h2v2h-2zM1229.9 974.3h2v2h-2zM1268.3 974.3h2v2h-2zM1306.7 974.3h2v2h-2zM1345.1 974.3h2v2h-2zM1383.5 974.3h2v2h-2zM1421.9 974.3h2v2h-2zM1460.3 974.3h2v2h-2zM1498.7 974.3h2v2h-2zM1537.1 974.3h2v2h-2zM1575.5 974.3h2v2h-2zM1613.9 974.3h2v2h-2zM1652.3 974.3h2v2h-2zM1690.7 974.3h2v2h-2zM1729.1 974.3h2v2h-2zM1767.5 974.3h2v2h-2zM1805.9 974.3h2v2h-2zM1844.3 974.3h2v2h-2zM1882.7 974.3h2v2h-2zM1921.1 974.3h2v2h-2zM231.4 176.7h2v2h-2zM231.4 276.4h2v2h-2zM231.4 376.1h2v2h-2zM231.4 475.8h2v2h-2zM231.4 675.2h2v2h-2zM231.4 774.9h2v2h-2zM231.4 874.6h2v2h-2zM231.4 974.3h2v2h-2zM423.4 176.7h2v2h-2zM423.4 276.4h2v2h-2zM423.4 376.1h2v2h-2zM423.4 475.8h2v2h-2zM423.4 675.2h2v2h-2zM423.4 774.9h2v2h-2zM423.4 874.6h2v2h-2zM423.4 974.3h2v2h-2zM615.4 176.7h2v2h-2zM615.4 276.4h2v2h-2zM615.4 376.1h2v2h-2zM615.4 475.8h2v2h-2zM615.4 675.2h2v2h-2zM615.4 774.9h2v2h-2zM615.4 874.6h2v2h-2zM615.4 974.3h2v2h-2zM807.4 176.7h2v2h-2zM807.4 276.4h2v2h-2zM807.4 376.1h2v2h-2zM807.4 475.8h2v2h-2zM807.4 675.2h2v2h-2zM807.4 774.9h2v2h-2zM807.4 874.6h2v2h-2zM807.4 974.3h2v2h-2zM1191.5 176.7h2v2h-2zM1191.5 276.4h2v2h-2zM1191.5 376.1h2v2h-2zM1191.5 475.8h2v2h-2zM1191.5 675.2h2v2h-2zM1191.5 774.9h2v2h-2zM1191.5 874.6h2v2h-2zM1191.5 974.3h2v2h-2zM1383.5 176.7h2v2h-2zM1383.5 276.4h2v2h-2zM1383.5 376.1h2v2h-2zM1383.5 475.8h2v2h-2zM1383.5 675.2h2v2h-2zM1383.5 774.9h2v2h-2zM1383.5 874.6h2v2h-2zM1383.5 974.3h2v2h-2zM1575.5 176.7h2v2h-2zM1575.5 276.4h2v2h-2zM1575.5 376.1h2v2h-2zM1575.5 475.8h2v2h-2zM1575.5 675.2h2v2h-2zM1575.5 774.9h2v2h-2zM1575.5 874.6h2v2h-2zM1575.5 974.3h2v2h-2zM1767.5 176.7h2v2h-2zM1767.5 276.4h2v2h-2zM1767.5 376.1h2v2h-2zM1767.5 475.8h2v2h-2zM1767.5 675.2h2v2h-2zM1767.5 774.9h2v2h-2zM1767.5 874.6h2v2h-2zM1767.5 974.3h2v2h-2z" fill="#8a8478"/>
<polyline points="41.0,475.0 44.0,475.0 47.0,475.0 50.0,475.0 53.0,473.5 56.0,473.6 59.0,475.1 62.0,476.6 65.0,478.1 68.0,478.1 71.0,478.1 74.0,476.6 77.0,473.6 80.0,475.2 83.0,476.7 86.0,476.7 89.0,473.7 92.0,470.7 95.0,470.7 98.0,470.7 101.0,472.2 104.0,473.8 107.0,475.3 110.0,473.8 113.0,475.3 116.0,475.3 119.0,473.8 122.0,478.3 125.0,478.3 128.0,479.9 131.0,476.9 134.0,475.4 137.0,475.4 140.0,475.4 143.0,475.4 146.0,476.9 149.0,475.4 152.0,474.0 155.0,474.0 158.0,475.5 161.0,474.0 164.0,475.5 167.0,475.5 170.0,474.0 173.0,474.0 176.0,477.1 179.0,472.6 182.0,472.6 185.0,474.1 188.0,472.6 191.0,474.1 194.0,474.1 197.0,472.6 200.0,474.2 203.0,475.7 206.0,477.2 209.0,480.2 212.0,478.7 215.0,478.7 218.0,475.7 221.0,477.2 224.0,475.8 227.0,474.3 230.0,472.8 233.0,471.3 236.0,472.8 239.0,475.8 242.0,472.8 245.0,471.3 248.0,472.8 251.0,475.9 254.0,477.4 257.0,472.9 260.0,469.9 263.0,471.4 266.0,471.4 269.0,471.4 272.0,474.4 275.0,476.0 278.0,476.0 281.0,477.5 284.0,477.5 287.0,479.0 290.0,479.0 293.0,479.0 296.0,479.0 299.0,476.1 302.0,477.6 305.0,479.1 308.0,479.1 311.0,474.6 314.0,474.6 317.0,476.1 320.0,473.1 323.0,473.2 326.0,476.2 329.0,473.2 332.0,477.7 335.0,477.7 338.0,477.7 341.0,477.7 344.0,477.7 347.0,477.8 350.0,479.3 353.0,477.8 356.0,476.3 359.0,477.8 362.0,477.8 365.0,476.3 368.0,477.8 371.0,479.4 374.0,477.9 377.0,474.9 380.0,474.9 383.0,474.9 386.0,474.9 389.0,477.9 392.0,476.4 395.0,478.0 398.0,475.0 401.0,475.0 404.0,476.5 407.0,478.0 410.0,479.5 413.0,479.5 416.0,478.0 419.0,478.1 422.0,478.1 425.0,478.1 428.0,478.1 431.0,478.1 434.0,478.1 437.0,479.6 440.0,479.6 443.0,482.6 446.0,481.2 449.0,479.7 452.0,478.2 455.0,478.2 458.0,478.2 461.0,478.2 464.0,478.2 467.0,481.2 470.0,475.3 473.0,473.8 476.0,475.3 479.0,476.8 482.0,476.8 485.0,476.8 488.0,476.8 491.0,478.3 494.0,476.9 497.0,481.4 500.0,479.9 503.0,478.4 506.0,478.4 509.0,476.9 512.0,476.9 515.0,472.4 518.0,472.5 521.0,475.5 524.0,474.0 527.0,475.5 530.0,474.1 533.0,469.1 536.0,451.0 539.0,415.4 542.0,365.5 545.0,328.8 548.0,306.3 551.0,292.5 554.0,278.5 557.0,267.0 560.0,256.6 563.0,250.0 566.0,242.5 569.0,239.5 572.0,236.8 575.0,233.4 578.0,232.2 581.0,232.0 584.0,232.3 587.0,233.5 590.0,235.6 593.0,238.2 596.0,239.0 599.0,242.5 602.0,242.5 605.0,245.3 608.0,247.4 611.0,250.1 614.0,251.5 617.0,251.0 620.0,252.4 623.0,250.9 626.0,247.6 629.0,246.9 632.0,245.7 635.0,245.9 638.0,245.3 641.0,247.4 644.0,248.6 647.0,250.6 650.0,249.1 653.0,249.4 656.0,248.7 659.0,249.9 662.0,252.2 665.0,251.0 668.0,253.4 671.0,254.9 674.0,254.6 677.0,252.5 680.0,254.9 683.0,253.8 686.0,253.6 689.0,253.3 692.0,254.0 695.0,254.7 698.0,252.7 701.0,254.2 704.0,254.9 707.0,255.6 710.0,253.6 713.0,252.4 716.0,253.1 719.0,252.0 722.0,251.8 725.0,252.7 728.0,251.7 731.0,248.9 734.0,248.8 737.0,247.9 740.0,249.6 743.0,249.5 746.0,249.4 749.0,249.4 752.0,250.2 755.0,250.1 758.0,251.9 761.0,250.9 764.0,251.9 767.0,252.9 770.0,253.8 773.0,252.1 776.0,253.1 779.0,250.5 782.0,249.7 785.0,247.9 788.0,249.8 791.0,249.0 794.0,249.0 797.0,250.0 800.0,250.1 803.0,249.9 806.0,249.7 809.0,251.3 812.0,251.2 815.0,251.0 818.0,251.7 821.0,250.6 824.0,249.5 827.0,250.7 830.0,263.6 833.0,307.9 836.0,382.6 839.0,438.9 842.0,472.0 845.0,484.6 848.0,491.7 851.0,497.6 854.0,497.5 857.0,493.8 860.0,491.6 863.0,491.2 866.0,489.3 869.0,485.9 872.0,484.0 875.0,481.3 878.0,480.2 881.0,479.0 884.0,479.4 887.0,475.7 890.0,476.7 893.0,476.2 896.0,474.2 899.0,476.7 902.0,476.3 905.0,473.0 908.0,472.7 911.0,475.4 914.0,475.1 917.0,476.3 920.0,477.5 923.0,478.7 926.0,478.5 929.0,479.9 932.0,479.8 935.0,479.7 938.0,475.1 941.0,476.5 944.0,479.5 947.0,477.9 950.0,476.3 953.0,479.2 956.0,476.1 959.0,476.0 962.0,480.5 965.0,477.5 968.0,479.0 971.0,480.5 974.0,479.0 977.0,479.0 980.0,480.5 983.0,477.5 986.0,477.5 989.0,477.5 992.0,477.5 995.0,477.5 998.0,476.0 1001.0,474.5 1004.0,474.5 1007.0,476.0 1010.0,476.0 1013.0,474.5 1016.0,474.5 1019.0,479.0 1022.0,480.5 1025.0,480.5 1028.0,474.5 1031.0,476.0 1034.0,477.5 1037.0,479.0 1040.0,479.0 1043.0,477.5 1046.0,479.0 1049.0,474.5 1052.0,476.0 1055.0,477.5 1058.0,476.0 1061.0,477.5 1064.0,480.5 1067.0,477.5 1070.0,476.0 1073.0,476.0 1076.0,476.0 1079.0,476.0 1082.0,474.5 1085.0,477.5 1088.0,479.0 1091.0,476.0 1094.0,474.5 1097.0,477.5 1100.0,479.0 1103.0,480.5 1106.0,480.5 1109.0,477.5 1112.0,477.5 1115.0,474.5 1118.0,473.0 1121.0,474.5 1124.0,476.0 1127.0,474.5 1130.0,474.5 1133.0,476.0 1136.0,476.0 1139.0,477.5 1142.0,477.5 1145.0,476.0 1148.0,477.5 1151.0,477.5 1154.0,476.0 1157.0,474.5 1160.0,474.5 1163.0,474.5 1166.0,476.0 1169.0,476.0 1172.0,476.0 1175.0,476.0 1178.0,473.0 1181.0,474.5 1184.0,477.5 1187.0,477.5 1190.0,477.5 1193.0,477.5 1196.0,476.0 1199.0,473.0 1202.0,473.0 1205.0,473.0 1208.0,474.5 1211.0,473.0 1214.0,470.0 1217.0,470.0 1220.0,474.5 1223.0,474.5 1226.0,471.5 1229.0,471.5 1232.0,474.5 1235.0,476.0 1238.0,476.0 1241.0,479.0 1244.0,479.0 1247.0,477.5 1250.0,479.0 1253.0,480.5 1256.0,480.5 1259.0,482.0 1262.0,477.5 1265.0,477.5 1268.0,477.5 1271.0,477.5 1274.0,479.0 1277.0,479.0 1280.0,479.0 1283.0,477.5 1286.0,482.0 1289.0,482.0 1292.0,480.5 1295.0,479.0 1298.0,482.0 1301.0,480.5 1304.0,480.5 1307.0,480.5 1310.0,479.0 1313.0,476.0 1316.0,476.0 1319.0,477.5 1322.0,479.0 1325.0,479.0 1328.0,479.0 1331.0,479.0 1334.0,479.0 1337.0,479.0 1340.0,477.5 1343.0,477.5 1346.0,477.5 1349.0,476.0 1352.0,474.5 1355.0,474.5 1358.0,473.0 1361.0,473.0 1364.0,470.0 1367.0,471.5 1370.0,473.0 1373.0,474.5 1376.0,474.5 1379.0,474.5 1382.0,473.0 1385.0,477.5 1388.0,477.5 1391.0,479.0 1394.0,476.0 1397.0,476.0 1400.0,473.0 1403.0,474.5 1406.0,477.5 1409.0,473.0 1412.0,474.5 1415.0,476.0 1418.0,473.0 1421.0,470.0 1424.0,470.0 1427.0,471.5 1430.0,470.0 1433.0,471.5 1436.0,473.0 1439.0,474.5 1442.0,476.0 1445.0,479.0 1448.0,480.5 1451.0,476.0 1454.0,476.0 1457.0,474.5 1460.0,473.0 1463.0,473.0 1466.0,474.5 1469.0,476.0 1472.0,473.0 1475.0,471.5 1478.0,473.0 1481.0,473.0 1484.0,473.0 1487.0,474.5 1490.0,473.0 1493.0,476.0 1496.0,476.0 1499.0,476.0 1502.0,474.5 1505.0,474.5 1508.0,470.0 1511.0,470.0 1514.0,471.5 1517.0,470.0 1520.0,473.0 1523.0,473.0 1526.0,471.5 1529.0,473.0 1532.0,473.0 1535.0,474.5 1538.0,476.0 1541.0,476.0 1544.0,474.5 1547.0,474.5 1550.0,474.5 1553.0,476.0 1556.0,477.5 1559.0,476.0 1562.0,473.0 1565.0,473.0 1568.0,473.0 1571.0,471.5 1574.0,473.0 1577.0,473.0 1580.0,474.5 1583.0,476.0 1586.0,474.5 1589.0,479.0 1592.0,477.5 1595.0,479.0 1598.0,479.0 1601.0,479.0 1604.0,474.5 1607.0,473.0 1610.0,474.5 1613.0,476.0 1616.0,480.5 1619.0,479.0 1622.0,480.5 1625.0,480.5 1628.0,480.5 1631.0,480.5 1634.0,479.0 1637.0,479.0 1640.0,476.0 1643.0,477.5 1646.0,476.0 1649.0,476.0 1652.0,480.5 1655.0,479.0 1658.0,477.5 1661.0,479.0 1664.0,479.0 1667.0,476.0 1670.0,476.0 1673.0,477.5 1676.0,479.0 1679.0,476.0 1682.0,479.0 1685.0,480.5 1688.0,479.0 1691.0,479.0 1694.0,477.5 1697.0,479.0 1700.0,477.5 1703.0,477.5 1706.0,476.0 1709.0,476.0 1712.0,476.0 1715.0,479.0 1718.0,477.5 1721.0,476.0 1724.0,477.5 1727.0,477.5 1730.0,477.5 1733.0,479.0 1736.0,480.5 1739.0,479.0 1742.0,482.0 1745.0,480.5 1748.0,480.5 1751.0,477.5 1754.0,477.5 1757.0,474.5 1760.0,477.5 1763.0,479.0 1766.0,476.0 1769.0,473.0 1772.0,471.5 1775.0,474.5 1778.0,474.5 1781.0,474.5 1784.0,474.5 1787.0,474.5 1790.0,473.0 1793.0,474.5 1796.0,471.5 1799.0,473.0 1802.0,474.5 1805.0,476.0 1808.0,476.0 1811.0,474.5 1814.0,474.5 1817.0,474.5 1820.0,477.5 1823.0,479.0 1826.0,477.5 1829.0,476.0 1832.0,474.5 1835.0,473.0 1838.0,473.0 1841.0,474.5 1844.0,476.0 1847.0,477.5 1850.0,480.5 1853.0,477.5 1856.0,477.5 1859.0,482.0 1862.0,477.5 1865.0,476.0 1868.0,476.0 1871.0,476.0 1874.0,477.5 1877.0,476.0 1880.0,477.5 1883.0,476.0 1886.0,477.5 1889.0,474.5 1892.0,473.0 1895.0,474.5 1898.0,473.0 1901.0,471.5 1904.0,474.5 1907.0,473.0 1910.0,476.0 1913.0,477.5 1916.0,477.5 1919.0,477.5 1922.0,477.5 1925.0,474.5 1928.0,474.5 1931.0,476.0 1934.0,474.5 1937.0,474.5 1940.0,476.0 1943.0,474.5 1946.0,476.0 1949.0,479.0 1952.0,477.5 1955.0,477.5 1958.0,476.0" fill="none" stroke="#f0a418" stroke-width="1.9" stroke-linejoin="round"/>
<polyline points="41.0,953.0 42.2,949.8 43.5,951.3 44.8,947.2 46.0,949.0 47.2,949.0 48.5,944.4 49.8,952.8 51.0,951.3 52.2,944.5 53.5,950.9 54.8,948.7 56.0,950.2 57.2,950.0 58.5,945.1 59.8,948.5 61.0,952.9 62.2,947.5 63.5,946.4 64.8,945.5 66.0,945.8 67.2,949.9 68.5,953.4 69.8,950.1 71.0,949.7 72.2,954.8 73.5,947.7 74.8,947.3 76.0,950.4 77.2,950.4 78.5,946.4 79.8,946.0 81.0,949.8 82.2,949.7 83.5,945.6 84.8,948.5 86.0,947.6 87.2,950.2 88.5,948.7 89.8,948.8 91.0,948.1 92.2,951.8 93.5,952.6 94.8,948.1 96.0,951.2 97.2,947.1 98.5,949.2 99.8,951.0 101.0,953.0 102.2,948.0 103.5,948.8 104.8,949.5 106.0,945.1 107.2,949.1 108.5,947.3 109.8,950.0 111.0,946.1 112.2,943.9 113.5,949.1 114.8,949.7 116.0,947.6 117.2,951.4 118.5,948.3 119.8,947.5 121.0,950.3 122.2,945.0 123.5,947.3 124.8,949.0 126.0,951.3 127.2,948.6 128.5,949.9 129.8,947.3 131.0,949.8 132.2,953.4 133.5,947.3 134.8,955.2 136.0,947.4 137.2,949.1 138.5,949.5 139.8,951.7 141.0,945.8 142.2,943.6 143.5,950.6 144.8,951.1 146.0,950.7 147.2,955.9 148.5,949.6 149.8,949.7 151.0,951.5 152.2,950.0 153.5,953.4 154.8,945.8 156.0,948.1 157.2,940.1 158.5,951.2 159.8,948.1 161.0,951.5 162.2,954.7 163.5,949.1 164.8,948.4 166.0,947.8 167.2,946.9 168.5,947.4 169.8,950.7 171.0,949.2 172.2,949.3 173.5,948.6 174.8,951.5 176.0,950.4 177.2,948.7 178.5,950.8 179.8,948.7 181.0,946.1 182.2,952.9 183.5,950.3 184.8,946.6 186.0,951.9 187.2,950.0 188.5,945.0 189.8,953.3 191.0,950.0 192.2,951.4 193.5,949.6 194.8,948.7 196.0,945.1 197.2,951.6 198.5,949.2 199.8,948.4 201.0,950.0 202.2,949.3 203.5,950.9 204.8,948.1 206.0,949.0 207.2,943.6 208.5,948.0 209.8,950.9 211.0,952.6 212.2,948.2 213.5,948.8 214.8,953.2 216.0,948.3 217.2,951.0 218.5,953.5 219.8,949.2 221.0,952.3 222.2,947.3 223.5,949.7 224.8,948.9 226.0,949.4 227.2,952.1 228.5,955.4 229.8,947.4 231.0,947.6 232.2,950.4 233.5,946.4 234.8,950.4 236.0,950.6 237.2,948.4 238.5,950.5 239.8,945.1 241.0,951.1 242.2,945.1 243.5,947.3 244.8,947.7 246.0,948.1 247.2,951.4 248.5,949.4 249.8,948.1 251.0,950.6 252.2,953.3 253.5,949.2 254.8,950.1 256.0,952.4 257.2,949.9 258.5,945.8 259.8,955.6 261.0,954.9 262.2,944.0 263.5,949.1 264.8,950.3 266.0,951.7 267.2,950.9 268.5,948.5 269.8,946.4 271.0,949.5 272.2,951.9 273.5,946.4 274.8,946.5 276.0,949.1 277.2,944.2 278.5,948.5 279.8,948.1 281.0,950.4 282.2,947.4 283.5,946.9 284.8,948.2 286.0,949.1 287.2,947.5 288.5,949.2 289.8,951.2 291.0,952.3 292.2,953.6 293.5,947.2 294.8,948.1 296.0,942.8 297.2,954.2 298.5,947.3 299.8,949.1 301.0,950.6 302.2,945.7 303.5,950.4 304.8,949.2 306.0,944.5 307.2,950.0 308.5,952.3 309.8,944.4 311.0,951.3 312.2,949.8 313.5,950.5 314.8,950.4 316.0,952.6 317.2,948.7 318.5,951.5 319.8,948.2 321.0,951.1 322.2,947.1 323.5,949.0 324.8,953.7 326.0,950.4 327.2,948.8 328.5,946.3 329.8,947.2 331.0,949.8 332.2,951.7 333.5,950.4 334.8,950.6 336.0,949.1 337.2,952.8 338.5,948.2 339.8,947.8 341.0,951.6 342.2,949.4 343.5,948.5 344.8,947.8 346.0,948.6 347.2,950.9 348.5,950.2 349.8,946.1 351.0,950.4 352.2,949.7 353.5,946.7 354.8,951.3 356.0,948.6 357.2,948.4 358.5,951.4 359.8,952.7 361.0,947.5 362.2,950.4 363.5,947.0 364.8,955.3 366.0,948.0 367.2,952.4 368.5,947.6 369.8,951.4 371.0,955.1 372.2,942.7 373.5,948.2 374.8,950.6 376.0,949.1 377.2,947.6 378.5,954.9 379.8,949.5 381.0,945.0 382.2,951.5 383.5,944.8 384.8,952.3 386.0,947.8 387.2,949.7 388.5,952.6 389.8,949.6 391.0,945.7 392.2,944.9 393.5,952.4 394.8,951.2 396.0,947.2 397.2,951.6 398.5,950.6 399.8,951.0 401.0,943.5 402.2,948.5 403.5,951.7 404.8,951.2 406.0,951.6 407.2,942.9 408.5,949.8 409.8,950.6 411.0,956.0 412.2,946.9 413.5,948.5 414.8,949.4 416.0,951.6 417.2,948.2 418.5,952.3 419.8,947.3 421.0,950.0 422.2,948.0 423.5,949.8 424.8,947.6 426.0,945.2 427.2,952.2 428.5,950.1 429.8,947.9 431.0,949.9 432.2,951.9 433.5,946.8 434.8,949.1 436.0,950.8 437.2,950.7 438.5,948.5 439.8,943.9 441.0,952.6 442.2,950.2 443.5,949.4 444.8,948.7 446.0,950.1 447.2,948.3 448.5,946.7 449.8,947.5 451.0,947.8 452.2,947.8 453.5,946.4 454.8,951.0 456.0,946.0 457.2,951.1 458.5,946.8 459.8,950.3 461.0,953.0 462.2,949.9 463.5,947.5 464.8,949.5 466.0,949.8 467.2,944.9 468.5,947.8 469.8,949.8 471.0,948.2 472.2,949.6 473.5,951.3 474.8,951.4 476.0,951.8 477.2,950.9 478.5,948.7 479.8,949.4 481.0,948.7 482.2,948.6 483.5,948.9 484.8,944.9 486.0,948.5 487.2,949.4 488.5,946.9 489.8,949.4 491.0,950.8 492.2,949.0 493.5,954.8 494.8,942.6 496.0,948.9 497.2,944.7 498.5,952.0 499.8,956.3 501.0,942.9 502.2,949.8 503.5,950.8 504.8,948.6 506.0,950.9 507.2,943.6 508.5,951.7 509.8,950.4 511.0,949.5 512.2,947.9 513.5,951.1 514.8,948.2 516.0,950.0 517.2,948.1 518.5,943.6 519.8,949.4 521.0,950.0 522.2,951.4 523.5,947.2 524.8,949.4 526.0,951.1 527.2,949.8 528.5,952.7 529.8,954.6 531.0,947.1 532.2,944.5 533.5,951.7 534.8,953.4 536.0,951.9 537.2,951.6 538.5,947.8 539.8,947.6 541.0,951.8 542.2,947.1 543.5,944.7 544.8,946.9 546.0,955.9 547.2,954.5 548.5,947.7 549.8,947.6 551.0,950.1 552.2,947.5 553.5,952.9 554.8,949.3 556.0,946.6 557.2,952.9 558.5,948.0 559.8,950.0 561.0,949.4 562.2,948.7 563.5,950.3 564.8,947.7 566.0,944.7 567.2,943.7 568.5,946.2 569.8,947.5 571.0,949.4 572.2,949.6 573.5,950.9 574.8,949.8 576.0,947.4 577.2,947.6 578.5,944.0 579.8,949.0 581.0,950.7 582.2,950.9 583.5,949.2 584.8,949.0 586.0,951.9 587.2,949.5 588.5,951.4 589.8,951.0 591.0,950.0 592.2,952.9 593.5,948.0 594.8,948.6 596.0,947.4 597.2,947.4 598.5,953.5 599.8,954.1 601.0,949.6 602.2,951.0 603.5,952.6 604.8,951.6 606.0,952.6 607.2,946.2 608.5,947.8 609.8,950.7 611.0,953.2 612.2,949.8 613.5,947.3 614.8,948.6 616.0,947.8 617.2,947.3 618.5,953.4 619.8,947.9 621.0,949.6 622.2,955.1 623.5,952.6 624.8,950.4 626.0,947.9 627.2,950.6 628.5,953.7 629.8,951.1 631.0,952.8 632.2,949.8 633.5,950.8 634.8,949.0 636.0,950.6 637.2,952.9 638.5,945.8 639.8,949.3 641.0,950.1 642.2,948.0 643.5,948.7 644.8,951.6 646.0,954.7 647.2,951.1 648.5,950.4 649.8,945.5 651.0,954.5 652.2,949.7 653.5,949.4 654.8,946.6 656.0,949.4 657.2,946.7 658.5,949.7 659.8,950.7 661.0,949.6 662.2,950.2 663.5,947.3 664.8,953.2 666.0,947.8 667.2,944.8 668.5,949.0 669.8,947.5 671.0,946.9 672.2,948.6 673.5,950.3 674.8,946.4 676.0,949.1 677.2,953.2 678.5,951.3 679.8,949.1 681.0,949.8 682.2,949.2 683.5,949.4 684.8,951.4 686.0,949.3 687.2,943.3 688.5,949.4 689.8,947.2 691.0,951.2 692.2,947.9 693.5,949.9 694.8,955.2 696.0,946.8 697.2,946.6 698.5,945.8 699.8,943.3 701.0,944.6 702.2,950.5 703.5,947.8 704.8,944.6 706.0,945.6 707.2,951.1 708.5,947.5 709.8,948.5 711.0,950.4 712.2,953.0 713.5,954.5 714.8,952.2 716.0,949.9 717.2,950.0 718.5,954.2 719.8,953.2 721.0,948.7 722.2,950.7 723.5,950.2 724.8,949.6 726.0,948.2 727.2,946.0 728.5,948.1 729.8,945.5 731.0,952.7 732.2,950.9 733.5,946.4 734.8,953.1 736.0,951.8 737.2,944.5 738.5,954.3 739.8,951.6 741.0,954.9 742.2,946.3 743.5,950.9 744.8,950.6 746.0,950.0 747.2,949.9 748.5,952.2 749.8,945.6 751.0,946.3 752.2,945.9 753.5,948.0 754.8,947.9 756.0,950.4 757.2,950.2 758.5,949.6 759.8,947.7 761.0,948.3 762.2,951.9 763.5,951.5 764.8,949.7 766.0,948.6 767.2,953.5 768.5,947.9 769.8,951.2 771.0,952.5 772.2,948.8 773.5,951.6 774.8,946.6 776.0,952.1 777.2,950.0 778.5,945.3 779.8,951.2 781.0,947.1 782.2,952.8 783.5,947.7 784.8,949.0 786.0,950.2 787.2,948.6 788.5,950.1 789.8,948.0 791.0,951.2 792.2,949.5 793.5,950.0 794.8,942.3 796.0,952.5 797.2,949.5 798.5,944.8 799.8,949.7 801.0,950.7 802.2,952.2 803.5,946.6 804.8,953.5 806.0,949.0 807.2,955.7 808.5,949.0 809.8,951.2 811.0,948.5 812.2,946.5 813.5,952.3 814.8,951.8 816.0,953.4 817.2,951.6 818.5,947.9 819.8,945.1 821.0,947.7 822.2,947.7 823.5,947.3 824.8,950.9 826.0,950.3 827.2,948.7 828.5,949.9 829.8,949.0 831.0,950.0 832.2,951.4 833.5,951.9 834.8,947.6 836.0,945.5 837.2,953.1 838.5,949.7 839.8,952.3 841.0,945.1 842.2,948.5 843.5,949.5 844.8,945.6 846.0,948.0 847.2,951.3 848.5,952.2 849.8,953.5 851.0,947.1 852.2,945.7 853.5,950.7 854.8,951.8 856.0,949.9 857.2,946.0 858.5,951.4 859.8,951.4 861.0,950.8 862.2,948.1 863.5,950.1 864.8,951.4 866.0,947.9 867.2,944.5 868.5,950.2 869.8,950.6 871.0,949.4 872.2,951.6 873.5,947.8 874.8,949.1 876.0,948.5 877.2,950.8 878.5,953.5 879.8,948.7 881.0,954.7 882.2,953.3 883.5,951.4 884.8,950.8 886.0,953.9 887.2,948.8 888.5,949.0 889.8,946.5 891.0,950.5 892.2,952.8 893.5,950.7 894.8,950.4 896.0,948.8 897.2,949.7 898.5,945.6 899.8,952.0 901.0,948.2 902.2,946.4 903.5,947.3 904.8,947.1 906.0,951.5 907.2,952.0 908.5,945.7 909.8,951.7 911.0,951.6 912.2,947.7 913.5,945.4 914.8,947.3 916.0,947.6 917.2,950.1 918.5,948.3 919.8,944.0 921.0,949.8 922.2,945.2 923.5,951.6 924.8,946.1 926.0,947.4 927.2,947.0 928.5,947.8 929.8,952.6 931.0,951.4 932.2,950.8 933.5,950.0 934.8,945.2 936.0,947.8 937.2,947.8 938.5,946.6 939.8,950.5 941.0,947.3 942.2,947.3 943.5,946.5 944.8,943.8 946.0,950.7 947.2,952.6 948.5,949.6 949.8,946.6 951.0,942.1 952.2,949.6 953.5,952.3 954.8,949.9 956.0,951.5 957.2,953.0 958.5,952.1 959.8,948.0 961.0,951.9 962.2,951.1 963.5,945.1 964.8,948.1 966.0,945.4 967.2,948.8 968.5,950.6 969.8,946.3 971.0,943.7 972.2,952.5 973.5,950.1 974.8,952.9 976.0,945.6 977.2,951.8 978.5,954.5 979.8,954.3 981.0,948.5 982.2,949.8 983.5,948.7 984.8,951.6 986.0,951.7 987.2,949.3 988.5,945.5 989.8,951.0 991.0,947.8 992.2,950.7 993.5,949.7 994.8,953.2 996.0,952.0 997.2,947.8 998.5,949.9 999.8,953.6 1001.0,947.6 1002.2,950.1 1003.5,952.0 1004.8,952.0 1006.0,950.0 1007.2,945.1 1008.5,945.0 1009.8,948.8 1011.0,948.9 1012.2,954.3 1013.5,945.2 1014.8,950.2 1016.0,949.0 1017.2,942.3 1018.5,944.3 1019.8,946.6 1021.0,944.6 1022.2,945.2 1023.5,946.6 1024.8,943.0 1026.0,946.1 1027.2,943.0 1028.5,943.0 1029.8,945.7 1031.0,942.6 1032.2,944.6 1033.5,947.9 1034.8,943.6 1036.0,942.9 1037.2,944.9 1038.5,941.8 1039.8,945.2 1041.0,938.7 1042.2,943.3 1043.5,939.9 1044.8,938.7 1046.0,944.9 1047.2,937.5 1048.5,943.6 1049.8,940.0 1051.0,941.3 1052.2,934.0 1053.5,938.7 1054.8,938.3 1056.0,933.0 1057.2,931.7 1058.5,937.1 1059.8,929.7 1061.0,926.6 1062.2,924.5 1063.5,925.6 1064.8,923.5 1066.0,921.3 1067.2,923.4 1068.5,916.1 1069.8,916.1 1071.0,916.3 1072.2,907.4 1073.5,910.0 1074.8,909.3 1076.0,898.2 1077.2,896.0 1078.5,893.2 1079.8,888.1 1081.0,891.1 1082.2,882.2 1083.5,885.4 1084.8,885.0 1086.0,874.0 1087.2,874.4 1088.5,867.2 1089.8,871.1 1091.0,864.0 1092.2,862.0 1093.5,859.4 1094.8,857.2 1096.0,851.2 1097.2,848.1 1098.5,842.2 1099.8,839.4 1101.0,831.4 1102.2,830.1 1103.5,820.5 1104.8,820.1 1106.0,822.5 1107.2,814.0 1108.5,806.9 1109.8,807.2 1111.0,800.4 1112.2,794.9 1113.5,793.3 1114.8,792.9 1116.0,787.5 1117.2,781.6 1118.5,774.8 1119.8,769.9 1121.0,771.8 1122.2,764.9 1123.5,758.0 1124.8,751.4 1126.0,749.8 1127.2,756.3 1128.5,743.5 1129.8,742.9 1131.0,740.4 1132.2,736.3 1133.5,732.8 1134.8,726.9 1136.0,724.7 1137.2,728.8 1138.5,719.5 1139.8,720.8 1141.0,711.3 1142.2,712.2 1143.5,710.9 1144.8,710.2 1146.0,702.0 1147.2,704.0 1148.5,701.1 1149.8,695.9 1151.0,696.8 1152.2,691.1 1153.5,689.2 1154.8,689.2 1156.0,680.3 1157.2,685.2 1158.5,681.1 1159.8,678.3 1161.0,679.6 1162.2,681.4 1163.5,677.3 1164.8,680.7 1166.0,673.5 1167.2,672.4 1168.5,679.2 1169.8,675.7 1171.0,676.6 1172.2,671.6 1173.5,675.5 1174.8,673.7 1176.0,674.5 1177.2,672.6 1178.5,675.4 1179.8,670.3 1181.0,669.2 1182.2,667.6 1183.5,674.2 1184.8,669.0 1186.0,667.9 1187.2,668.0 1188.5,669.0 1189.8,666.7 1191.0,669.0 1192.2,668.0 1193.5,668.0 1194.8,666.8 1196.0,669.3 1197.2,667.9 1198.5,669.3 1199.8,669.5 1201.0,669.7 1202.2,663.0 1203.5,667.2 1204.8,666.5 1206.0,670.5 1207.2,664.4 1208.5,666.6 1209.8,667.6 1211.0,667.5 1212.2,670.9 1213.5,667.1 1214.8,670.8 1216.0,664.4 1217.2,663.5 1218.5,671.4 1219.8,669.3 1221.0,669.4 1222.2,668.5 1223.5,669.4 1224.8,665.0 1226.0,670.6 1227.2,666.8 1228.5,670.7 1229.8,668.4 1231.0,663.0 1232.2,664.8 1233.5,671.1 1234.8,667.9 1236.0,667.2 1237.2,668.9 1238.5,667.1 1239.8,666.8 1241.0,668.5 1242.2,668.7 1243.5,672.3 1244.8,668.5 1246.0,673.2 1247.2,673.1 1248.5,672.8 1249.8,671.2 1251.0,668.8 1252.2,668.8 1253.5,668.1 1254.8,666.5 1256.0,668.3 1257.2,666.8 1258.5,672.7 1259.8,669.9 1261.0,667.4 1262.2,663.6 1263.5,668.5 1264.8,667.6 1266.0,666.0 1267.2,665.9 1268.5,663.1 1269.8,670.6 1271.0,669.1 1272.2,676.2 1273.5,669.6 1274.8,669.5 1276.0,673.7 1277.2,670.5 1278.5,670.7 1279.8,669.5 1281.0,669.1 1282.2,674.9 1283.5,673.9 1284.8,676.2 1286.0,671.4 1287.2,673.0 1288.5,671.3 1289.8,677.0 1291.0,671.9 1292.2,678.3 1293.5,681.2 1294.8,683.8 1296.0,679.6 1297.2,686.9 1298.5,684.3 1299.8,686.3 1301.0,687.0 1302.2,695.5 1303.5,698.8 1304.8,694.8 1306.0,696.2 1307.2,699.1 1308.5,708.2 1309.8,706.0 1311.0,703.8 1312.2,702.3 1313.5,707.1 1314.8,713.9 1316.0,717.7 1317.2,714.3 1318.5,715.5 1319.8,718.4 1321.0,717.4 1322.2,727.4 1323.5,725.0 1324.8,733.5 1326.0,729.2 1327.2,733.3 1328.5,740.3 1329.8,740.6 1331.0,747.6 1332.2,748.6 1333.5,748.5 1334.8,756.3 1336.0,760.1 1337.2,756.2 1338.5,769.4 1339.8,769.6 1341.0,774.2 1342.2,771.4 1343.5,778.6 1344.8,783.9 1346.0,792.1 1347.2,790.1 1348.5,796.1 1349.8,797.7 1351.0,806.9 1352.2,812.8 1353.5,811.8 1354.8,818.9 1356.0,825.9 1357.2,832.9 1358.5,834.6 1359.8,836.2 1361.0,838.0 1362.2,842.6 1363.5,847.2 1364.8,853.1 1366.0,856.3 1367.2,864.4 1368.5,864.2 1369.8,864.0 1371.0,874.1 1372.2,875.7 1373.5,876.7 1374.8,877.6 1376.0,877.6 1377.2,882.7 1378.5,890.7 1379.8,889.1 1381.0,890.6 1382.2,897.3 1383.5,900.2 1384.8,904.0 1386.0,906.9 1387.2,911.7 1388.5,908.6 1389.8,916.0 1391.0,913.5 1392.2,920.4 1393.5,921.4 1394.8,923.8 1396.0,927.7 1397.2,927.0 1398.5,931.5 1399.8,932.4 1401.0,931.9 1402.2,931.3 1403.5,932.0 1404.8,933.6 1406.0,935.4 1407.2,936.8 1408.5,945.4 1409.8,940.2 1411.0,941.2 1412.2,937.7 1413.5,938.8 1414.8,940.5 1416.0,942.4 1417.2,939.7 1418.5,947.1 1419.8,941.9 1421.0,946.5 1422.2,938.0 1423.5,944.4 1424.8,945.4 1426.0,945.5 1427.2,946.8 1428.5,946.3 1429.8,946.2 1431.0,941.2 1432.2,944.5 1433.5,940.5 1434.8,948.5 1436.0,948.0 1437.2,946.9 1438.5,945.5 1439.8,946.3 1441.0,952.8 1442.2,952.7 1443.5,948.2 1444.8,951.9 1446.0,944.5 1447.2,943.7 1448.5,947.5 1449.8,946.5 1451.0,947.4 1452.2,949.3 1453.5,956.7 1454.8,947.1 1456.0,949.0 1457.2,949.6 1458.5,948.8 1459.8,951.3 1461.0,953.5 1462.2,945.6 1463.5,949.3 1464.8,948.2 1466.0,949.8 1467.2,944.9 1468.5,944.3 1469.8,942.9 1471.0,950.3 1472.2,949.4 1473.5,949.1 1474.8,942.8 1476.0,947.9 1477.2,947.0 1478.5,945.3 1479.8,946.6 1481.0,950.8 1482.2,950.4 1483.5,948.9 1484.8,950.3 1486.0,947.4 1487.2,949.2 1488.5,949.1 1489.8,950.4 1491.0,948.8 1492.2,948.6 1493.5,948.6 1494.8,947.3 1496.0,954.8 1497.2,950.3 1498.5,950.1 1499.8,955.0 1501.0,952.7 1502.2,945.0 1503.5,950.8 1504.8,951.2 1506.0,953.9 1507.2,952.5 1508.5,951.0 1509.8,946.0 1511.0,946.8 1512.2,949.8 1513.5,950.4 1514.8,946.4 1516.0,948.1 1517.2,948.0 1518.5,949.2 1519.8,950.0 1521.0,948.3 1522.2,945.9 1523.5,952.3 1524.8,953.2 1526.0,948.8 1527.2,951.8 1528.5,950.3 1529.8,950.8 1531.0,950.4 1532.2,947.1 1533.5,950.6 1534.8,951.7 1536.0,946.8 1537.2,954.2 1538.5,954.6 1539.8,953.9 1541.0,954.3 1542.2,951.1 1543.5,948.3 1544.8,947.6 1546.0,947.0 1547.2,949.4 1548.5,949.1 1549.8,950.9 1551.0,943.9 1552.2,955.2 1553.5,955.1 1554.8,949.1 1556.0,950.9 1557.2,950.4 1558.5,949.9 1559.8,948.6 1561.0,948.9 1562.2,947.0 1563.5,949.6 1564.8,949.1 1566.0,950.0 1567.2,947.0 1568.5,949.3 1569.8,949.3 1571.0,950.8 1572.2,946.4 1573.5,950.3 1574.8,951.8 1576.0,950.8 1577.2,948.2 1578.5,947.9 1579.8,948.6 1581.0,951.1 1582.2,953.2 1583.5,948.8 1584.8,947.5 1586.0,950.2 1587.2,949.7 1588.5,946.9 1589.8,947.3 1591.0,949.0 1592.2,951.0 1593.5,946.1 1594.8,946.6 1596.0,950.5 1597.2,946.0 1598.5,949.5 1599.8,950.1 1601.0,948.9 1602.2,946.6 1603.5,949.1 1604.8,948.4 1606.0,950.1 1607.2,947.1 1608.5,952.1 1609.8,944.9 1611.0,948.8 1612.2,949.3 1613.5,951.7 1614.8,947.7 1616.0,950.7 1617.2,947.8 1618.5,951.2 1619.8,953.8 1621.0,948.2 1622.2,950.4 1623.5,946.8 1624.8,951.8 1626.0,952.4 1627.2,949.3 1628.5,946.3 1629.8,950.3 1631.0,952.2 1632.2,952.1 1633.5,951.4 1634.8,944.5 1636.0,947.5 1637.2,953.0 1638.5,946.1 1639.8,952.2 1641.0,954.1 1642.2,951.2 1643.5,952.2 1644.8,948.4 1646.0,946.1 1647.2,949.0 1648.5,948.7 1649.8,949.1 1651.0,951.1 1652.2,948.9 1653.5,949.8 1654.8,950.4 1656.0,949.2 1657.2,954.0 1658.5,950.4 1659.8,949.5 1661.0,948.7 1662.2,947.6 1663.5,952.8 1664.8,949.6 1666.0,946.5 1667.2,947.8 1668.5,948.9 1669.8,948.1 1671.0,952.1 1672.2,946.2 1673.5,950.5 1674.8,949.6 1676.0,946.2 1677.2,949.4 1678.5,949.0 1679.8,950.6 1681.0,948.1 1682.2,950.0 1683.5,944.9 1684.8,946.4 1686.0,951.3 1687.2,952.0 1688.5,949.2 1689.8,947.7 1691.0,952.1 1692.2,943.8 1693.5,947.2 1694.8,951.0 1696.0,950.9 1697.2,946.6 1698.5,944.3 1699.8,953.0 1701.0,949.6 1702.2,946.9 1703.5,949.4 1704.8,951.6 1706.0,942.5 1707.2,952.1 1708.5,951.2 1709.8,943.8 1711.0,951.2 1712.2,944.6 1713.5,952.2 1714.8,950.3 1716.0,955.1 1717.2,947.6 1718.5,949.2 1719.8,952.0 1721.0,947.6 1722.2,947.4 1723.5,948.3 1724.8,949.0 1726.0,946.4 1727.2,950.5 1728.5,950.6 1729.8,949.4 1731.0,953.6 1732.2,948.4 1733.5,952.6 1734.8,947.8 1736.0,951.2 1737.2,944.2 1738.5,949.7 1739.8,948.8 1741.0,947.9 1742.2,947.6 1743.5,948.3 1744.8,947.3 1746.0,943.5 1747.2,947.7 1748.5,947.8 1749.8,947.8 1751.0,946.5 1752.2,948.8 1753.5,951.2 1754.8,948.5 1756.0,947.9 1757.2,952.7 1758.5,951.7 1759.8,951.6 1761.0,952.2 1762.2,948.3 1763.5,948.9 1764.8,952.1 1766.0,947.7 1767.2,948.9 1768.5,950.2 1769.8,950.2 1771.0,948.5 1772.2,951.7 1773.5,948.7 1774.8,951.1 1776.0,952.0 1777.2,950.9 1778.5,951.1 1779.8,946.2 1781.0,945.8 1782.2,947.6 1783.5,950.4 1784.8,953.1 1786.0,946.0 1787.2,950.0 1788.5,946.9 1789.8,947.3 1791.0,948.4 1792.2,951.0 1793.5,949.7 1794.8,952.2 1796.0,946.6 1797.2,951.5 1798.5,951.6 1799.8,949.3 1801.0,950.4 1802.2,947.7 1803.5,946.3 1804.8,948.1 1806.0,947.5 1807.2,956.7 1808.5,947.9 1809.8,953.4 1811.0,949.7 1812.2,949.9 1813.5,951.1 1814.8,947.1 1816.0,951.5 1817.2,950.1 1818.5,945.2 1819.8,950.7 1821.0,950.6 1822.2,950.3 1823.5,953.2 1824.8,948.0 1826.0,950.4 1827.2,951.1 1828.5,946.8 1829.8,952.2 1831.0,945.3 1832.2,945.7 1833.5,950.5 1834.8,946.3 1836.0,948.8 1837.2,944.8 1838.5,949.3 1839.8,946.2 1841.0,950.0 1842.2,945.1 1843.5,950.3 1844.8,948.4 1846.0,949.3 1847.2,948.9 1848.5,949.4 1849.8,945.7 1851.0,942.4 1852.2,949.2 1853.5,946.6 1854.8,947.9 1856.0,950.2 1857.2,943.9 1858.5,947.1 1859.8,947.5 1861.0,946.3 1862.2,949.9 1863.5,948.7 1864.8,946.9 1866.0,946.5 1867.2,951.2 1868.5,947.4 1869.8,950.6 1871.0,950.2 1872.2,944.1 1873.5,946.2 1874.8,949.1 1876.0,949.9 1877.2,951.1 1878.5,951.1 1879.8,951.7 1881.0,948.1 1882.2,948.5 1883.5,951.1 1884.8,947.9 1886.0,951.8 1887.2,944.9 1888.5,950.7 1889.8,948.6 1891.0,943.9 1892.2,951.6 1893.5,949.8 1894.8,949.1 1896.0,946.2 1897.2,947.8 1898.5,953.0 1899.8,946.9 1901.0,940.0 1902.2,946.8 1903.5,945.9 1904.8,948.7 1906.0,948.0 1907.2,946.7 1908.5,946.8 1909.8,951.8 1911.0,945.3 1912.2,954.1 1913.5,947.6 1914.8,946.2 1916.0,951.1 1917.2,950.5 1918.5,946.3 1919.8,951.0 1921.0,944.2 1922.2,946.6 1923.5,951.9 1924.8,948.3 1926.0,945.6 1927.2,950.3 1928.5,951.4 1929.8,949.0 1931.0,944.3 1932.2,948.1 1933.5,950.1 1934.8,951.0 1936.0,953.8 1937.2,948.4 1938.5,947.8 1939.8,948.9 1941.0,952.1 1942.2,946.6 1943.5,952.4 1944.8,941.9 1946.0,951.1 1947.2,947.2 1948.5,950.2 1949.8,950.8 1951.0,945.9 1952.2,948.8 1953.5,949.6 1954.8,950.5 1956.0,946.6 1957.2,946.4 1958.5,944.0" fill="none" stroke="#b028f0" stroke-width="2.1" stroke-linejoin="round"/>
<rect x="574.5" y="329.5" width="231" height="78" fill="#fff" stroke="#404040" stroke-width="1.5"/>
<text x="604.5" y="378.4" font-size="29.5" fill="#101020" textLength="166.5" lengthAdjust="spacingAndGlyphs">Sync_In TTL</text>
<rect x="1372" y="672" width="349" height="76" fill="#fff"/>
<text x="1403" y="720.3" font-size="31" fill="#000" textLength="281" lengthAdjust="spacingAndGlyphs">AOM optical output</text>
<path d="M1104.4 77.6 L1125.6 77.6 L1115 96.3 Z" fill="#ffa808"/>
<circle cx="28.7" cy="476.6" r="18.8" fill="#ffa808"/>
<path d="M44 474.5h9v-6.5l13.6 9l-13.6 9v-6.5h-9z" fill="#ffa808"/>
<text x="14" y="484.5" font-size="22" fill="#100800" stroke="#100800" stroke-width="0.35" textLength="28" lengthAdjust="spacingAndGlyphs">M1</text>
<circle cx="28.6" cy="976" r="17.5" fill="#c028f0" stroke="#a8a898" stroke-width="2"/>
<path d="M44 973.5h9v-6.5l13.6 9l-13.6 9v-6.5h-9z" fill="#c028f0"/>
<text x="14.3" y="983.5" font-size="22" fill="#100010" stroke="#100010" stroke-width="0.35" textLength="29.3" lengthAdjust="spacingAndGlyphs">M2</text>
<rect x="40" y="1087" width="1920.5" height="388.5" fill="#000"/>
<rect x="50" y="1092" width="538.5" height="89" rx="9" fill="none" stroke="#c8c8c8" stroke-width="2"/>
<rect x="64.5" y="1105.5" width="64.5" height="26" rx="13.0" fill="#2a2a2a"/>
<rect x="65.5" y="1106" width="62.5" height="20" rx="10.0" fill="#d0d0d0"/>
<rect x="66.0" y="1108.5" width="61.5" height="21.5" rx="10.75" fill="url(#gM1)"/>
<text x="96.75" y="1124.0" font-size="16.5" font-weight="bold" fill="#201800" text-anchor="middle">M1</text>
<rect x="64.5" y="1146.5" width="64.5" height="26" rx="13.0" fill="#2a2a2a"/>
<rect x="65.5" y="1147" width="62.5" height="20" rx="10.0" fill="#d0d0d0"/>
<rect x="66.0" y="1149.5" width="61.5" height="21.5" rx="10.75" fill="url(#gM2)"/>
<text x="96.75" y="1165.0" font-size="16.5" font-weight="bold" fill="#200030" text-anchor="middle">M2</text>
<text x="137.3" y="1124" font-size="20" font-weight="bold" fill="#ffffff" textLength="49.6" lengthAdjust="spacingAndGlyphs">1.5V</text>
<text x="232.0" y="1124" font-size="20" font-weight="bold" fill="#ffffff" textLength="75.0" lengthAdjust="spacingAndGlyphs">20.0ns</text>
<text x="136.5" y="1164" font-size="20" font-weight="bold" fill="#ffffff" textLength="84.3" lengthAdjust="spacingAndGlyphs">25.0mV</text>
<text x="232.0" y="1164" font-size="20" font-weight="bold" fill="#ffffff" textLength="75.0" lengthAdjust="spacingAndGlyphs">20.0ns</text>
<rect x="1144.5" y="1092.5" width="355.5" height="48.5" rx="9" fill="none" stroke="#c8c8c8" stroke-width="2"/>
<rect x="1156.3" y="1104.8" width="28.5" height="27.5" fill="#d8d8d8" stroke="#f0a020" stroke-width="2"/>
<text x="1158.5" y="1124" font-size="19" font-weight="bold" fill="#000" textLength="19" lengthAdjust="spacingAndGlyphs">A'</text>
<rect x="1188.5" y="1105.5" width="64" height="27" rx="13.5" fill="#2a2a2a"/>
<rect x="1189.5" y="1106" width="62" height="21" rx="10.5" fill="#d0d0d0"/>
<rect x="1190.0" y="1108.5" width="61" height="22.5" rx="11.25" fill="url(#gC2)"/>
<text x="1220.5" y="1124.5" font-size="16.5" font-weight="bold" fill="#002830" text-anchor="middle">C2</text>
<path d="M1258 1128h7l14-21h6" fill="none" stroke="#fff" stroke-width="3"/>
<text x="1288.5" y="1124.3" font-size="20" font-weight="bold" fill="#ffffff" textLength="83.5" lengthAdjust="spacingAndGlyphs">46.8mV</text>
<rect x="1509" y="1092" width="442.5" height="177.5" rx="9" fill="none" stroke="#c8c8c8" stroke-width="2"/>
<text x="1522.2" y="1124" font-size="20" font-weight="bold" fill="#ffffff" textLength="116.3" lengthAdjust="spacingAndGlyphs">20.0ns/div</text>
<text x="1646.5" y="1124" font-size="20" font-weight="bold" fill="#ffffff" textLength="102.7" lengthAdjust="spacingAndGlyphs">20.0GS/s</text>
<text x="1762.8" y="1124" font-size="20" font-weight="bold" fill="#ffffff" textLength="21.7" lengthAdjust="spacingAndGlyphs">IT</text>
<text x="1810.2" y="1124" font-size="20" font-weight="bold" fill="#ffffff" textLength="105.6" lengthAdjust="spacingAndGlyphs">25.0ps/pt</text>
<text x="1522.2" y="1164.4" font-size="20" font-weight="bold" fill="#22e622" textLength="48.0" lengthAdjust="spacingAndGlyphs">Run</text>
<text x="1686.9" y="1164.4" font-size="20" font-weight="bold" fill="#ffffff" textLength="84.8" lengthAdjust="spacingAndGlyphs">Sample</text>
<rect x="1915" y="1144" width="6" height="24" rx="3" fill="#f0f020"/><circle cx="1918" cy="1170.5" r="6.8" fill="#f0f020"/>
<text x="1522.2" y="1203.5" font-size="20" font-weight="bold" fill="#ffffff" textLength="101.3" lengthAdjust="spacingAndGlyphs">882 acqs</text>
<text x="1792.5" y="1203.5" font-size="20" font-weight="bold" fill="#ffffff" textLength="85.9" lengthAdjust="spacingAndGlyphs">RL:8.0k</text>
<text x="1522.2" y="1243.8" font-size="20" font-weight="bold" fill="#ffffff" textLength="56.3" lengthAdjust="spacingAndGlyphs">Auto</text>
<text x="1604.0" y="1243.8" font-size="20" font-weight="bold" fill="#ffffff" textLength="180.7" lengthAdjust="spacingAndGlyphs">August 03, 2021</text>
<text x="1842.2" y="1243.8" font-size="20" font-weight="bold" fill="#f0a020" textLength="95.4" lengthAdjust="spacingAndGlyphs">08:33:41</text>
<rect x="50" y="1192" width="1084.5" height="240.5" rx="9" fill="none" stroke="#c8c8c8" stroke-width="2"/>
<text x="287.0" y="1228.8" font-size="20" font-weight="bold" fill="#ffffff" textLength="65.1" lengthAdjust="spacingAndGlyphs">Value</text>
<text x="432.5" y="1228.8" font-size="20" font-weight="bold" fill="#ffffff" textLength="62.3" lengthAdjust="spacingAndGlyphs">Mean</text>
<text x="586.9" y="1228.8" font-size="20" font-weight="bold" fill="#ffffff" textLength="41.5" lengthAdjust="spacingAndGlyphs">Min</text>
<text x="718.5" y="1228.8" font-size="20" font-weight="bold" fill="#ffffff" textLength="46.8" lengthAdjust="spacingAndGlyphs">Max</text>
<text x="838.5" y="1228.8" font-size="20" font-weight="bold" fill="#ffffff" textLength="76.0" lengthAdjust="spacingAndGlyphs">St Dev</text>
<text x="965.3" y="1228.8" font-size="20" font-weight="bold" fill="#ffffff" textLength="71.2" lengthAdjust="spacingAndGlyphs">Count</text>
<text x="1070.5" y="1228.8" font-size="20" font-weight="bold" fill="#ffffff" textLength="45.4" lengthAdjust="spacingAndGlyphs">Info</text>
<rect x="387.9" y="1242.3" width="153.60000000000002" height="182.20000000000005" fill="#242424"/>
<rect x="676.1" y="1242.3" width="133.89999999999998" height="182.20000000000005" fill="#242424"/>
<path d="M253.8 1242.3V1424.5M387.9 1242.3V1424.5M541.5 1242.3V1424.5M676.1 1242.3V1424.5M810 1242.3V1424.5M944.6 1242.3V1424.5M1060.6 1242.3V1424.5M1129.2 1242.3V1424.5M253.8 1242.3H1129.2M253.8 1278.2H1129.2M253.8 1314.9H1129.2M253.8 1351H1129.2M253.8 1387.8H1129.2M253.8 1424.5H1129.2" stroke="#c8c8c8" stroke-width="1.9" fill="none"/>
<rect x="65" y="1243.8" width="64" height="26.5" rx="13.25" fill="#2a2a2a"/>
<rect x="66" y="1244.3" width="62" height="20.5" rx="10.25" fill="#d0d0d0"/>
<rect x="66.5" y="1246.8" width="61" height="22.0" rx="11.0" fill="url(#gC1)"/>
<text x="97.0" y="1262.55" font-size="16.5" font-weight="bold" fill="#202000" text-anchor="middle">C1</text>
<text x="141.9" y="1265.8" font-size="20" font-weight="bold" fill="#ffffff" textLength="52.2" lengthAdjust="spacingAndGlyphs">Freq</text>
<rect x="65" y="1280.2" width="64" height="26.5" rx="13.25" fill="#2a2a2a"/>
<rect x="66" y="1280.7" width="62" height="20.5" rx="10.25" fill="#d0d0d0"/>
<rect x="66.5" y="1283.2" width="61" height="22.0" rx="11.0" fill="url(#gC1)"/>
<text x="97.0" y="1298.95" font-size="16.5" font-weight="bold" fill="#202000" text-anchor="middle">C1</text>
<text x="141.9" y="1302.2" font-size="20" font-weight="bold" fill="#ffffff" textLength="50.9" lengthAdjust="spacingAndGlyphs">Rise</text>
<rect x="65" y="1316.6" width="64" height="26.5" rx="13.25" fill="#2a2a2a"/>
<rect x="66" y="1317.1" width="62" height="20.5" rx="10.25" fill="#d0d0d0"/>
<rect x="66.5" y="1319.6" width="61" height="22.0" rx="11.0" fill="url(#gC2)"/>
<text x="97.0" y="1335.35" font-size="16.5" font-weight="bold" fill="#002830" text-anchor="middle">C2</text>
<text x="141.9" y="1338.6" font-size="20" font-weight="bold" fill="#ffffff" textLength="50.9" lengthAdjust="spacingAndGlyphs">Rise</text>
<rect x="65" y="1353.0" width="64" height="26.5" rx="13.25" fill="#2a2a2a"/>
<rect x="66" y="1353.5" width="62" height="20.5" rx="10.25" fill="#d0d0d0"/>
<rect x="66.5" y="1356.0" width="61" height="22.0" rx="11.0" fill="url(#gC1)"/>
<text x="97.0" y="1371.75" font-size="16.5" font-weight="bold" fill="#202000" text-anchor="middle">C1</text>
<text x="141.9" y="1375" font-size="20" font-weight="bold" fill="#ffffff" textLength="41.8" lengthAdjust="spacingAndGlyphs">Fall</text>
<rect x="65" y="1389.2" width="64" height="26.5" rx="13.25" fill="#2a2a2a"/>
<rect x="66" y="1389.7" width="62" height="20.5" rx="10.25" fill="#d0d0d0"/>
<rect x="66.5" y="1392.2" width="61" height="22.0" rx="11.0" fill="url(#gC2)"/>
<text x="97.0" y="1407.95" font-size="16.5" font-weight="bold" fill="#002830" text-anchor="middle">C2</text>
<text x="141.9" y="1411.2" font-size="20" font-weight="bold" fill="#ffffff" textLength="50.9" lengthAdjust="spacingAndGlyphs">Fall*</text>
<text x="256.0" y="1265.8" font-size="20" font-weight="bold" fill="#ffffff" textLength="38.8" lengthAdjust="spacingAndGlyphs">-Hz</text>
<text x="390.09999999999997" y="1265.8" font-size="20" font-weight="bold" fill="#ffffff" textLength="16.2" lengthAdjust="spacingAndGlyphs">?</text>
<text x="543.7" y="1265.8" font-size="20" font-weight="bold" fill="#ffffff" textLength="16.2" lengthAdjust="spacingAndGlyphs">?</text>
<text x="678.3000000000001" y="1265.8" font-size="20" font-weight="bold" fill="#ffffff" textLength="16.2" lengthAdjust="spacingAndGlyphs">?</text>
<text x="812.2" y="1265.8" font-size="20" font-weight="bold" fill="#ffffff" textLength="34.9" lengthAdjust="spacingAndGlyphs">0.0</text>
<text x="946.8000000000001" y="1265.8" font-size="20" font-weight="bold" fill="#ffffff" textLength="34.9" lengthAdjust="spacingAndGlyphs">0.0</text>
<text x="256.0" y="1302.2" font-size="20" font-weight="bold" fill="#ffffff" textLength="76.2" lengthAdjust="spacingAndGlyphs">1.93ns</text>
<text x="390.09999999999997" y="1302.2" font-size="20" font-weight="bold" fill="#ffffff" textLength="129.6" lengthAdjust="spacingAndGlyphs">1.9017398n</text>
<text x="543.7" y="1302.2" font-size="20" font-weight="bold" fill="#ffffff" textLength="76.2" lengthAdjust="spacingAndGlyphs">1.714n</text>
<text x="678.3000000000001" y="1302.2" font-size="20" font-weight="bold" fill="#ffffff" textLength="76.2" lengthAdjust="spacingAndGlyphs">2.062n</text>
<text x="812.2" y="1302.2" font-size="20" font-weight="bold" fill="#ffffff" textLength="76.2" lengthAdjust="spacingAndGlyphs">57.05p</text>
<text x="946.8000000000001" y="1302.2" font-size="20" font-weight="bold" fill="#ffffff" textLength="61.6" lengthAdjust="spacingAndGlyphs">878.0</text>
<text x="256.0" y="1338.6" font-size="20" font-weight="bold" fill="#ffffff" textLength="89.6" lengthAdjust="spacingAndGlyphs">7.619ns</text>
<text x="390.09999999999997" y="1338.6" font-size="20" font-weight="bold" fill="#ffffff" textLength="129.6" lengthAdjust="spacingAndGlyphs">7.6681687n</text>
<text x="543.7" y="1338.6" font-size="20" font-weight="bold" fill="#ffffff" textLength="76.2" lengthAdjust="spacingAndGlyphs">6.066n</text>
<text x="678.3000000000001" y="1338.6" font-size="20" font-weight="bold" fill="#ffffff" textLength="76.2" lengthAdjust="spacingAndGlyphs">9.022n</text>
<text x="812.2" y="1338.6" font-size="20" font-weight="bold" fill="#ffffff" textLength="76.2" lengthAdjust="spacingAndGlyphs">616.3p</text>
<text x="946.8000000000001" y="1338.6" font-size="20" font-weight="bold" fill="#ffffff" textLength="61.6" lengthAdjust="spacingAndGlyphs">878.0</text>
<text x="256.0" y="1375" font-size="20" font-weight="bold" fill="#ffffff" textLength="89.6" lengthAdjust="spacingAndGlyphs">804.1ps</text>
<text x="390.09999999999997" y="1375" font-size="20" font-weight="bold" fill="#ffffff" textLength="129.6" lengthAdjust="spacingAndGlyphs">794.56586p</text>
<text x="543.7" y="1375" font-size="20" font-weight="bold" fill="#ffffff" textLength="76.2" lengthAdjust="spacingAndGlyphs">714.1p</text>
<text x="678.3000000000001" y="1375" font-size="20" font-weight="bold" fill="#ffffff" textLength="76.2" lengthAdjust="spacingAndGlyphs">909.3p</text>
<text x="812.2" y="1375" font-size="20" font-weight="bold" fill="#ffffff" textLength="76.2" lengthAdjust="spacingAndGlyphs">27.68p</text>
<text x="946.8000000000001" y="1375" font-size="20" font-weight="bold" fill="#ffffff" textLength="61.6" lengthAdjust="spacingAndGlyphs">878.0</text>
<text x="256.0" y="1411.2" font-size="20" font-weight="bold" fill="#ffffff" textLength="89.6" lengthAdjust="spacingAndGlyphs">7.962ns</text>
<text x="390.09999999999997" y="1411.2" font-size="20" font-weight="bold" fill="#ffffff" textLength="129.6" lengthAdjust="spacingAndGlyphs">7.6723562n</text>
<text x="543.7" y="1411.2" font-size="20" font-weight="bold" fill="#ffffff" textLength="76.2" lengthAdjust="spacingAndGlyphs">5.886n</text>
<text x="678.3000000000001" y="1411.2" font-size="20" font-weight="bold" fill="#ffffff" textLength="62.9" lengthAdjust="spacingAndGlyphs">9.47n</text>
<text x="812.2" y="1411.2" font-size="20" font-weight="bold" fill="#ffffff" textLength="76.2" lengthAdjust="spacingAndGlyphs">570.2p</text>
<text x="946.8000000000001" y="1411.2" font-size="20" font-weight="bold" fill="#ffffff" textLength="61.6" lengthAdjust="spacingAndGlyphs">878.0</text>
<circle cx="1095.5" cy="1259.7" r="14" fill="url(#gBall)" stroke="#e8f0ff" stroke-width="2.2"/>
<text x="1095" y="1267" font-size="19" font-weight="bold" font-style="italic" fill="#e82020" text-anchor="middle">X</text>
<circle cx="1102" cy="1332.6" r="9.2" fill="url(#gBall)" stroke="#e8f0ff" stroke-width="1.8"/>
<text x="1102" y="1338.6" font-size="16" font-weight="bold" fill="#e02040" text-anchor="middle">?</text>
<circle cx="1102" cy="1405" r="9.2" fill="url(#gBall)" stroke="#e8f0ff" stroke-width="1.8"/>
<text x="1102" y="1411" font-size="16" font-weight="bold" fill="#e02040" text-anchor="middle">?</text>
</svg></body></html>
